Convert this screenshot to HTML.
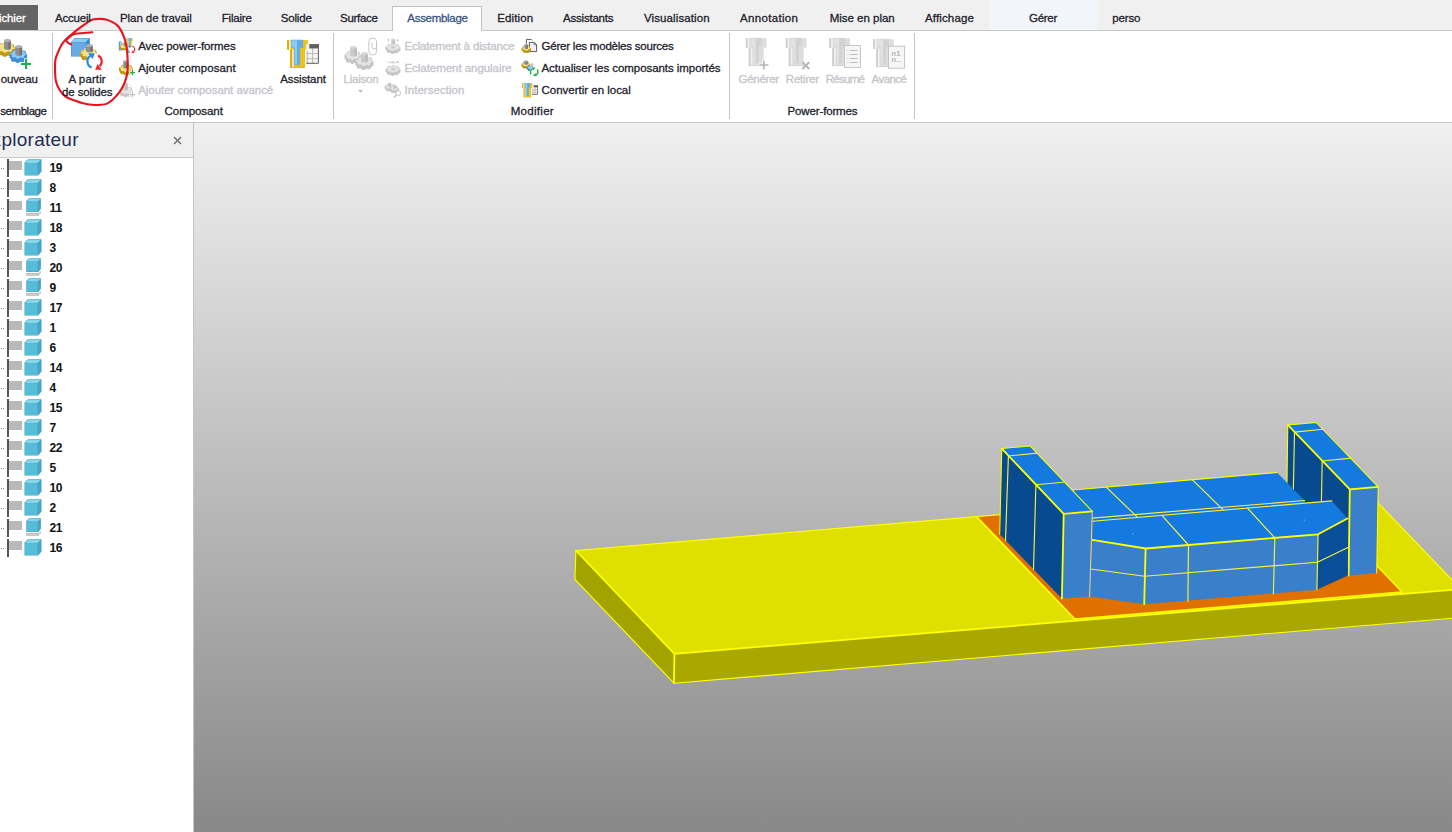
<!DOCTYPE html>
<html><head><meta charset="utf-8"><title>TopSolid</title>
<style>
html,body{margin:0;padding:0;width:1452px;height:832px;overflow:hidden;background:#f0f0f0;font-family:"Liberation Sans",sans-serif;}
body{position:relative}
.t{position:absolute;white-space:pre;font-family:"Liberation Sans",sans-serif;font-weight:400;-webkit-text-stroke:0.3px currentColor}
#tabs{position:absolute;left:0;top:0;width:1452px;height:30px;background:#f0f0f0;border-bottom:1px solid #c8c8c8}
#fichier{position:absolute;left:0;top:5px;width:38px;height:25px;background:#646464}
#gerer{position:absolute;left:989px;top:0;width:109px;height:30px;background:#f2f6fa}
#acttab{position:absolute;left:392px;top:6px;width:88px;height:25px;background:#fff;border:1px solid #c2c2c2;border-bottom:none}
#ribbon{position:absolute;left:0;top:31px;width:1452px;height:91px;background:#fff;border-bottom:1px solid #c9c9c9}
#strip{position:absolute;left:0;top:123px;width:1452px;height:10px;background:#f0f0f0}
.sep{position:absolute;top:33px;width:1px;height:86px;background:#c6c6c6;display:block}
#view{position:absolute;left:194px;top:123px;width:1258px;height:709px;background:linear-gradient(to bottom,#f0f0f0 0%,#888888 100%);overflow:hidden}
#exp{position:absolute;left:0;top:123px;width:193px;height:709px;background:#fff;border-right:1px solid #c4c4c4;overflow:hidden}
#exph{position:absolute;left:0;top:0;width:193px;height:34px;background:#f0f0f0;border-bottom:1px solid #cdcdcd}
#expx{position:absolute;left:173px;top:13px;width:9px;height:9px}
#expx svg{display:block}
#tree{position:absolute;left:0;top:-123px}
.row{position:absolute;left:0;width:193px;height:20px}
.row i{position:absolute;display:block}
.row .d1{left:1px;top:10px;width:1px;height:1px;background:#8a8a8a}
.row .d2{left:3px;top:10px;width:1px;height:1px;background:#8a8a8a}
.row .pole{left:7px;top:1px;width:2px;height:18px;background:#555}
.row .flag{left:9px;top:3px;width:13px;height:9px;background:#b9b9b9}
.row .cube{position:absolute;left:23px;top:0}
.row b{position:absolute;left:49.5px;top:3px;font-size:12px;line-height:14px;font-weight:700;color:#111;letter-spacing:-0.3px}
.ic{position:absolute;display:block;overflow:visible}

</style></head>
<body>
<svg width="0" height="0" style="position:absolute">
<defs>
<g id="cb">
<polygon points="1.5,4.5 5,1.2 18.5,1.2 18.5,13.5 15,17.5 1.5,17.5" fill="#3f9fbd"/>
<polygon points="2,5 5.3,1.8 18,1.8 14.6,5" fill="#84d6ec"/>
<polygon points="14.9,5.2 18,2.2 18,13.3 14.9,16.8" fill="#47a6c3"/>
<rect x="2" y="5.2" width="12.6" height="11.8" fill="#56bdd9"/>
</g>
<g id="cs">
<polygon points="3.3,3.1 6.1,0.3 17.8,0.3 17.8,11.1 15.2,13.9 3.3,13.9" fill="#3f9fbd"/>
<polygon points="3.8,3.6 6.4,0.8 17.3,0.8 14.7,3.6" fill="#84d6ec"/>
<polygon points="15,3.8 17.3,1.3 17.3,10.9 15,13.4" fill="#47a6c3"/>
<rect x="3.8" y="3.8" width="10.9" height="9.7" fill="#56bdd9"/>
<polygon points="3.3,15.1 15.3,15.1 17.8,12.9 17.8,14.9 15.3,17.8 3.3,17.8" fill="#a4acac"/>
<rect x="3.8" y="15.6" width="11" height="1.7" fill="#cfd5d5"/>
<polygon points="15.6,15.2 17.4,13.6 17.4,14.7 15.6,16.9" fill="#e4e8e8"/>
</g>
</defs>
</svg>

<div id="tabs"></div>
<div id="fichier"></div>
<div id="gerer"></div>
<div id="acttab"></div>
<div id="ribbon"></div>
<div id="strip"></div>
<i class="sep" style="left:52px"></i><i class="sep" style="left:333px"></i><i class="sep" style="left:729px"></i><i class="sep" style="left:914px"></i>
<div id="view">
<svg id="m3d" width="1258" height="709" viewBox="194 123 1258 709" style="position:absolute;left:0;top:0;display:block">
<g stroke-linejoin="round" stroke-linecap="round">
<!-- plate fills -->
<polygon points="575.9,550.5 674.4,653.8 673.9,683.2 574.9,579.3" fill="#a3a300"/>
<polygon points="674.4,653.8 1460,589.2 1460,617.6 673.9,683.2" fill="#a8a800"/>
<polygon points="575.9,550.5 1360,484.2 1460,588.2 1460,589.2 674.4,653.8" fill="#e0e000"/>
<polygon points="976.4,516.6 1303.5,488.9 1402,592 1074.8,619" fill="#e07000"/>
<g stroke="#ffff00" fill="none">
<path stroke-width="1.15" d="M575.9 550.5L574.9 579.3L673.9 683.2L1460 617.6M575.9 550.5L1360 484.2L1460 588.2"/>
<path stroke-width="1.8" d="M575.9 550.5L674.4 653.8L1460 589.2M674.4 653.8L673.9 683.2"/>
<path stroke-width="1.8" d="M976.4 516.6L1074.8 619"/><path stroke-width="1.4" d="M1074.8 619L1402 592L1303.5 488.9"/>
</g>
<!-- right wall -->
<polygon points="1287.8,424.9 1349.8,489.3 1348.6,575.4 1286.6,511" fill="#084a8f"/>
<polygon points="1349.8,489.3 1378.2,486.9 1376.7,573 1348.6,575.4" fill="#3a7fc9"/>
<polygon points="1287.8,424.9 1316.2,422.5 1378.2,486.9 1349.8,489.3" fill="#157ae0"/>
<path d="M1294.5 432.1L1322.9 429.2M1294.5 432.1L1292.8 518M1322.2 461L1351 458.1M1322.2 461L1320.5 547" stroke="#faf038" stroke-width="1.15" fill="none"/>
<path d="M1287.8 424.9L1316.2 422.5L1378.2 486.9L1376.7 573M1287.8 424.9L1286.6 511" stroke="#ffff00" stroke-width="1.05" fill="none"/><path d="M1287.8 424.9L1349.8 489.3L1378.2 486.9M1349.8 489.3L1348.6 575.4" stroke="#ffff00" stroke-width="1.8" fill="none"/>
<!-- back row -->
<polygon points="1072.5,490 1277,472.5 1304.6,500.5 1092.5,517.7" fill="#157ae0"/>
<polygon points="1092.5,517.7 1304.6,500.5 1305.2,503.2 1092.5,521.2" fill="#157ae0"/>
<path d="M1106.2 487.1L1137.4 517.2M1192.3 479.7L1223.4 510.2" stroke="#faf038" stroke-width="1.15" fill="none"/>
<path d="M1072.5 490L1277 472.5" stroke="#ffff00" stroke-width="1.2" fill="none"/>
<path d="M1092.5 518.1L1304.6 500.5" stroke="#f4ec58" stroke-width="1.1" fill="none"/>
<!-- front row -->
<polygon points="1092.3,539.8 1145.6,548.5 1144.2,604.2 1089.8,596.5" fill="#3a7fc9"/>
<polygon points="1145.6,548.5 1318.1,534.3 1316.9,589.8 1144.2,604.2" fill="#3a7fc9"/>
<polygon points="1318.1,534.3 1347.4,518.5 1347.9,575.4 1316.9,589.8" fill="#0a4f99"/>
<polygon points="1092.5,521.2 1331.8,500.9 1347.4,518.5 1318.1,534.3 1145.6,548.5 1092.3,539.8" fill="#157ae0"/>
<path d="M1090.8 569L1144.6 576.3L1317.4 562.2L1347.9 547.5M1188.5 545L1187.9 601.3M1274.8 537.9L1273.4 593.9M1161.9 515.3L1188.5 545M1247.5 508.1L1274.8 537.9M1318.1 534.3L1316.9 589.8" stroke="#faf038" stroke-width="1.15" fill="none"/>
<path d="M1092.5 521.2L1331.8 500.9" stroke="#faf038" stroke-width="1.15" fill="none"/>
<path d="M1092.3 539.8L1145.6 548.5L1318.1 534.3L1347.4 518.5M1145.6 548.5L1144.2 604.2" stroke="#ffff00" stroke-width="1.8" fill="none"/>
<rect x="1132" y="533" width="1.2" height="1.4" fill="#7fa6dc"/><rect x="1303.6" y="519.5" width="1.2" height="1.4" fill="#7fa6dc"/>
<!-- left wall -->
<polygon points="1001.8,448.6 1063.7,513.9 1061.9,598.6 999.7,534.3" fill="#084a8f"/>
<polygon points="1063.7,513.9 1092.3,511.3 1089.6,596.7 1061.9,598.6" fill="#3a7fc9"/>
<polygon points="1001.8,448.6 1030.1,445.9 1092.3,511.3 1063.7,513.9" fill="#157ae0"/>
<path d="M1008.4 456L1036.7 453.1M1008.4 456L1005.5 540.4M1035.9 484.8L1063.2 482.2M1035.9 484.8L1033.5 569.5" stroke="#faf038" stroke-width="1.15" fill="none"/>
<path d="M1092.3 511.3L1089.6 596.7" stroke="#d6d8a8" stroke-width="1" fill="none"/>
<path d="M1001.8 448.6L1030.1 445.9L1092.3 511.3M1001.8 448.6L999.7 534.3" stroke="#ffff00" stroke-width="1.05" fill="none"/><path d="M1001.8 448.6L1063.7 513.9L1092.3 511.3M1063.7 513.9L1061.9 598.6" stroke="#ffff00" stroke-width="1.8" fill="none"/>
</g>
</svg>

</div>
<div id="exp"><div id="exph"></div><div id="expx"><svg width="9" height="9" viewBox="0 0 9 9"><path d="M1 1L8 8M8 1L1 8" stroke="#707070" stroke-width="1.5" fill="none"/></svg></div>
<div id="tree">
<div class="row" style="top:158px"><i class="d1"></i><i class="d2"></i><i class="pole"></i><i class="flag"></i><svg class="cube" width="20" height="20" viewBox="0 0 20 20"><use href="#cb"/></svg><b>19</b></div>
<div class="row" style="top:178px"><i class="d1"></i><i class="d2"></i><i class="pole"></i><i class="flag"></i><svg class="cube" width="20" height="20" viewBox="0 0 20 20"><use href="#cb"/></svg><b>8</b></div>
<div class="row" style="top:198px"><i class="d1"></i><i class="d2"></i><i class="pole"></i><i class="flag"></i><svg class="cube" width="20" height="20" viewBox="0 0 20 20"><use href="#cs"/></svg><b>11</b></div>
<div class="row" style="top:218px"><i class="d1"></i><i class="d2"></i><i class="pole"></i><i class="flag"></i><svg class="cube" width="20" height="20" viewBox="0 0 20 20"><use href="#cb"/></svg><b>18</b></div>
<div class="row" style="top:238px"><i class="d1"></i><i class="d2"></i><i class="pole"></i><i class="flag"></i><svg class="cube" width="20" height="20" viewBox="0 0 20 20"><use href="#cb"/></svg><b>3</b></div>
<div class="row" style="top:258px"><i class="d1"></i><i class="d2"></i><i class="pole"></i><i class="flag"></i><svg class="cube" width="20" height="20" viewBox="0 0 20 20"><use href="#cs"/></svg><b>20</b></div>
<div class="row" style="top:278px"><i class="d1"></i><i class="d2"></i><i class="pole"></i><i class="flag"></i><svg class="cube" width="20" height="20" viewBox="0 0 20 20"><use href="#cs"/></svg><b>9</b></div>
<div class="row" style="top:298px"><i class="d1"></i><i class="d2"></i><i class="pole"></i><i class="flag"></i><svg class="cube" width="20" height="20" viewBox="0 0 20 20"><use href="#cb"/></svg><b>17</b></div>
<div class="row" style="top:318px"><i class="d1"></i><i class="d2"></i><i class="pole"></i><i class="flag"></i><svg class="cube" width="20" height="20" viewBox="0 0 20 20"><use href="#cb"/></svg><b>1</b></div>
<div class="row" style="top:338px"><i class="d1"></i><i class="d2"></i><i class="pole"></i><i class="flag"></i><svg class="cube" width="20" height="20" viewBox="0 0 20 20"><use href="#cb"/></svg><b>6</b></div>
<div class="row" style="top:358px"><i class="d1"></i><i class="d2"></i><i class="pole"></i><i class="flag"></i><svg class="cube" width="20" height="20" viewBox="0 0 20 20"><use href="#cb"/></svg><b>14</b></div>
<div class="row" style="top:378px"><i class="d1"></i><i class="d2"></i><i class="pole"></i><i class="flag"></i><svg class="cube" width="20" height="20" viewBox="0 0 20 20"><use href="#cb"/></svg><b>4</b></div>
<div class="row" style="top:398px"><i class="d1"></i><i class="d2"></i><i class="pole"></i><i class="flag"></i><svg class="cube" width="20" height="20" viewBox="0 0 20 20"><use href="#cb"/></svg><b>15</b></div>
<div class="row" style="top:418px"><i class="d1"></i><i class="d2"></i><i class="pole"></i><i class="flag"></i><svg class="cube" width="20" height="20" viewBox="0 0 20 20"><use href="#cb"/></svg><b>7</b></div>
<div class="row" style="top:438px"><i class="d1"></i><i class="d2"></i><i class="pole"></i><i class="flag"></i><svg class="cube" width="20" height="20" viewBox="0 0 20 20"><use href="#cb"/></svg><b>22</b></div>
<div class="row" style="top:458px"><i class="d1"></i><i class="d2"></i><i class="pole"></i><i class="flag"></i><svg class="cube" width="20" height="20" viewBox="0 0 20 20"><use href="#cb"/></svg><b>5</b></div>
<div class="row" style="top:478px"><i class="d1"></i><i class="d2"></i><i class="pole"></i><i class="flag"></i><svg class="cube" width="20" height="20" viewBox="0 0 20 20"><use href="#cb"/></svg><b>10</b></div>
<div class="row" style="top:498px"><i class="d1"></i><i class="d2"></i><i class="pole"></i><i class="flag"></i><svg class="cube" width="20" height="20" viewBox="0 0 20 20"><use href="#cb"/></svg><b>2</b></div>
<div class="row" style="top:518px"><i class="d1"></i><i class="d2"></i><i class="pole"></i><i class="flag"></i><svg class="cube" width="20" height="20" viewBox="0 0 20 20"><use href="#cs"/></svg><b>21</b></div>
<div class="row" style="top:538px"><i class="d1"></i><i class="d2"></i><i class="pole"></i><i class="flag"></i><svg class="cube" width="20" height="20" viewBox="0 0 20 20"><use href="#cb"/></svg><b>16</b></div>
</div></div>
<svg class="ic" id="icons" width="1452" height="124" viewBox="0 0 1452 124" style="left:0;top:0">
<path d="M15.1 51.4L14.92 52.36L14.92 48.76L15.1 47.8ZM14.92 52.36L12.6 52.9L12.6 49.3L14.92 48.76ZM12.6 52.9L11.89 53.58L11.89 49.98L12.6 49.3ZM11.89 49.98L12.29 51.26L12.29 54.86L11.89 53.58ZM12.29 54.86L10.83 55.47L10.83 51.87L12.29 51.26ZM10.83 55.47L8.44 55.02L8.44 51.42L10.83 51.87ZM8.44 55.02L7 55.24L7 51.64L8.44 51.42ZM7 55.24L5.5 56.3L5.5 52.7L7 51.64ZM5.5 56.3L3.63 56.21L3.63 52.61L5.5 52.7ZM3.63 56.21L2.56 55.02L2.56 51.42L3.63 52.61ZM2.56 55.02L1.23 54.66L1.23 51.06L2.56 51.42ZM1.23 54.66L-1.29 54.86L-1.29 51.26L1.23 51.06ZM-1.29 54.86L-2.48 54.12L-2.48 50.52L-1.29 51.26ZM-2.48 50.52L-1.6 49.3L-1.6 52.9L-2.48 54.12ZM-1.6 52.9L-2.03 52.16L-2.03 48.56L-1.6 49.3ZM-2.03 52.16L-4.1 51.4L-4.1 47.8L-2.03 48.56ZM-4.1 47.8L-3.92 46.84L-3.92 50.44L-4.1 51.4ZM-3.92 46.84L-1.6 46.3L-1.6 49.9L-3.92 50.44ZM-1.6 46.3L-0.89 45.62L-0.89 49.22L-1.6 49.9ZM-0.89 49.22L-1.29 47.94L-1.29 44.34L-0.89 45.62ZM-1.29 44.34L0.17 43.73L0.17 47.33L-1.29 47.94ZM0.17 43.73L2.56 44.18L2.56 47.78L0.17 47.33ZM2.56 44.18L4 43.96L4 47.56L2.56 47.78ZM4 43.96L5.5 42.9L5.5 46.5L4 47.56ZM5.5 42.9L7.37 42.99L7.37 46.59L5.5 46.5ZM7.37 42.99L8.44 44.18L8.44 47.78L7.37 46.59ZM8.44 44.18L9.77 44.54L9.77 48.14L8.44 47.78ZM9.77 44.54L12.29 44.34L12.29 47.94L9.77 48.14ZM12.29 44.34L13.48 45.08L13.48 48.68L12.29 47.94ZM13.48 48.68L12.6 49.9L12.6 46.3L13.48 45.08ZM12.6 46.3L13.03 47.04L13.03 50.64L12.6 49.9ZM13.03 47.04L15.1 47.8L15.1 51.4L13.03 50.64ZM15.1 51.4L14.92 52.36L12.6 52.9L11.89 53.58L12.29 54.86L10.83 55.47L8.44 55.02L7 55.24L5.5 56.3L3.63 56.21L2.56 55.02L1.23 54.66L-1.29 54.86L-2.48 54.12L-1.6 52.9L-2.03 52.16L-4.1 51.4L-3.92 50.44L-1.6 49.9L-0.89 49.22L-1.29 47.94L0.17 47.33L2.56 47.78L4 47.56L5.5 46.5L7.37 46.59L8.44 47.78L9.77 48.14L12.29 47.94L13.48 48.68L12.6 49.9L13.03 50.64ZM15.1 47.8L14.92 48.76L12.6 49.3L11.89 49.98L12.29 51.26L10.83 51.87L8.44 51.42L7 51.64L5.5 52.7L3.63 52.61L2.56 51.42L1.23 51.06L-1.29 51.26L-2.48 50.52L-1.6 49.3L-2.03 48.56L-4.1 47.8L-3.92 46.84L-1.6 46.3L-0.89 45.62L-1.29 44.34L0.17 43.73L2.56 44.18L4 43.96L5.5 42.9L7.37 42.99L8.44 44.18L9.77 44.54L12.29 44.34L13.48 45.08L12.6 46.3L13.03 47.04Z" fill="#cfa81c" stroke="#b89414" stroke-width="0.6" stroke-linejoin="round" fill-rule="nonzero"/><polygon points="15.1,47.8 14.92,48.76 12.6,49.3 11.89,49.98 12.29,51.26 10.83,51.87 8.44,51.42 7,51.64 5.5,52.7 3.63,52.61 2.56,51.42 1.23,51.06 -1.29,51.26 -2.48,50.52 -1.6,49.3 -2.03,48.56 -4.1,47.8 -3.92,46.84 -1.6,46.3 -0.89,45.62 -1.29,44.34 0.17,43.73 2.56,44.18 4,43.96 5.5,42.9 7.37,42.99 8.44,44.18 9.77,44.54 12.29,44.34 13.48,45.08 12.6,46.3 13.03,47.04" fill="#f6e284"/>
<path d="M4.1 40.47L4.1 48.33A3.35 1.47 0 0 0 10.8 48.33L10.8 40.47Z" fill="#8e8e8e"/><path d="M8.25 40.47L8.25 49.65A3.35 1.47 0 0 0 10.8 48.33L10.8 40.47Z" fill="#747474"/><ellipse cx="7.45" cy="40.47" rx="3.35" ry="1.47" fill="#b2b2b2"/>
<path d="M26.6 58L26.44 58.9L26.44 55.1L26.6 54.2ZM26.44 58.9L24.46 59.41L24.46 55.61L26.44 55.1ZM24.46 59.41L23.85 60.04L23.85 56.24L24.46 55.61ZM23.85 56.24L24.2 57.45L24.2 61.25L23.85 60.04ZM24.2 61.25L22.96 61.82L22.96 58.02L24.2 57.45ZM22.96 61.82L20.91 61.4L20.91 57.6L22.96 58.02ZM20.91 61.4L19.68 61.61L19.68 57.81L20.91 57.6ZM19.68 61.61L18.4 62.6L18.4 58.8L19.68 57.81ZM18.4 62.6L16.8 62.51L16.8 58.71L18.4 58.8ZM16.8 62.51L15.89 61.4L15.89 57.6L16.8 58.71ZM15.89 61.4L14.76 61.06L14.76 57.26L15.89 57.6ZM14.76 61.06L12.6 61.25L12.6 57.45L14.76 57.26ZM12.6 61.25L11.58 60.56L11.58 56.76L12.6 57.45ZM11.58 56.76L12.34 55.61L12.34 59.41L11.58 60.56ZM12.34 59.41L11.97 58.72L11.97 54.92L12.34 55.61ZM11.97 58.72L10.2 58L10.2 54.2L11.97 54.92ZM10.2 54.2L10.36 53.3L10.36 57.1L10.2 58ZM10.36 53.3L12.34 52.79L12.34 56.59L10.36 57.1ZM12.34 52.79L12.95 52.16L12.95 55.96L12.34 56.59ZM12.95 55.96L12.6 54.75L12.6 50.95L12.95 52.16ZM12.6 50.95L13.84 50.38L13.84 54.18L12.6 54.75ZM13.84 50.38L15.89 50.8L15.89 54.6L13.84 54.18ZM15.89 50.8L17.12 50.59L17.12 54.39L15.89 54.6ZM17.12 50.59L18.4 49.6L18.4 53.4L17.12 54.39ZM18.4 49.6L20 49.69L20 53.49L18.4 53.4ZM20 49.69L20.91 50.8L20.91 54.6L20 53.49ZM20.91 50.8L22.04 51.14L22.04 54.94L20.91 54.6ZM22.04 51.14L24.2 50.95L24.2 54.75L22.04 54.94ZM24.2 50.95L25.22 51.64L25.22 55.44L24.2 54.75ZM25.22 55.44L24.46 56.59L24.46 52.79L25.22 51.64ZM24.46 52.79L24.83 53.48L24.83 57.28L24.46 56.59ZM24.83 53.48L26.6 54.2L26.6 58L24.83 57.28ZM26.6 58L26.44 58.9L24.46 59.41L23.85 60.04L24.2 61.25L22.96 61.82L20.91 61.4L19.68 61.61L18.4 62.6L16.8 62.51L15.89 61.4L14.76 61.06L12.6 61.25L11.58 60.56L12.34 59.41L11.97 58.72L10.2 58L10.36 57.1L12.34 56.59L12.95 55.96L12.6 54.75L13.84 54.18L15.89 54.6L17.12 54.39L18.4 53.4L20 53.49L20.91 54.6L22.04 54.94L24.2 54.75L25.22 55.44L24.46 56.59L24.83 57.28ZM26.6 54.2L26.44 55.1L24.46 55.61L23.85 56.24L24.2 57.45L22.96 58.02L20.91 57.6L19.68 57.81L18.4 58.8L16.8 58.71L15.89 57.6L14.76 57.26L12.6 57.45L11.58 56.76L12.34 55.61L11.97 54.92L10.2 54.2L10.36 53.3L12.34 52.79L12.95 52.16L12.6 50.95L13.84 50.38L15.89 50.8L17.12 50.59L18.4 49.6L20 49.69L20.91 50.8L22.04 51.14L24.2 50.95L25.22 51.64L24.46 52.79L24.83 53.48Z" fill="#4a9cdc" stroke="#3e8ccc" stroke-width="0.6" stroke-linejoin="round" fill-rule="nonzero"/><polygon points="26.6,54.2 26.44,55.1 24.46,55.61 23.85,56.24 24.2,57.45 22.96,58.02 20.91,57.6 19.68,57.81 18.4,58.8 16.8,58.71 15.89,57.6 14.76,57.26 12.6,57.45 11.58,56.76 12.34,55.61 11.97,54.92 10.2,54.2 10.36,53.3 12.34,52.79 12.95,52.16 12.6,50.95 13.84,50.38 15.89,50.8 17.12,50.59 18.4,49.6 20,49.69 20.91,50.8 22.04,51.14 24.2,50.95 25.22,51.64 24.46,52.79 24.83,53.48" fill="#8ccaf8"/>
<path d="M15.3 46.6L15.3 54.2A3.4 1.5 0 0 0 22.1 54.2L22.1 46.6Z" fill="#8e8e8e"/><path d="M19.52 46.6L19.52 55.55A3.4 1.5 0 0 0 22.1 54.2L22.1 46.6Z" fill="#747474"/><ellipse cx="18.7" cy="46.6" rx="3.4" ry="1.5" fill="#b2b2b2"/>
<path d="M20.45 63.95H31.65M26.05 58.35V69.55" stroke="#fff" stroke-width="3.7" fill="none"/><path d="M21.05 63.95H31.05M26.05 58.95V68.95" stroke="#1cb04a" stroke-width="2.1" fill="none"/>
<polygon points="71,41.9 74.9,38.1 89.8,38.1 89.8,52.5 86,56.6 71,56.6" fill="#4690cc"/>
<polygon points="71.5,41.9 75.1,38.6 89.3,38.6 85.8,41.9" fill="#8ccaf8"/>
<polygon points="86.2,42 89.4,38.9 89.4,52.3 86.2,55.8" fill="#3d8ccc"/>
<rect x="71.5" y="42.3" width="14.2" height="13.8" fill="#68aae2"/>
<ellipse cx="89" cy="55" rx="9.2" ry="7.2" fill="#fff"/>
<path d="M97.2 56.6L97.04 57.46L97.04 54.06L97.2 53.2ZM97.04 57.46L95.06 57.95L95.06 54.55L97.04 54.06ZM95.06 57.95L94.45 58.56L94.45 55.16L95.06 54.55ZM94.45 55.16L94.8 56.31L94.8 59.71L94.45 58.56ZM94.8 59.71L93.56 60.26L93.56 56.86L94.8 56.31ZM93.56 60.26L91.51 59.85L91.51 56.45L93.56 56.86ZM91.51 59.85L90.28 60.05L90.28 56.65L91.51 56.45ZM90.28 60.05L89 61L89 57.6L90.28 56.65ZM89 61L87.4 60.92L87.4 57.52L89 57.6ZM87.4 60.92L86.49 59.85L86.49 56.45L87.4 57.52ZM86.49 59.85L85.36 59.53L85.36 56.13L86.49 56.45ZM85.36 59.53L83.2 59.71L83.2 56.31L85.36 56.13ZM83.2 59.71L82.18 59.04L82.18 55.64L83.2 56.31ZM82.18 55.64L82.94 54.55L82.94 57.95L82.18 59.04ZM82.94 57.95L82.57 57.29L82.57 53.89L82.94 54.55ZM82.57 57.29L80.8 56.6L80.8 53.2L82.57 53.89ZM80.8 53.2L80.96 52.34L80.96 55.74L80.8 56.6ZM80.96 52.34L82.94 51.85L82.94 55.25L80.96 55.74ZM82.94 51.85L83.55 51.24L83.55 54.64L82.94 55.25ZM83.55 54.64L83.2 53.49L83.2 50.09L83.55 51.24ZM83.2 50.09L84.44 49.54L84.44 52.94L83.2 53.49ZM84.44 49.54L86.49 49.95L86.49 53.35L84.44 52.94ZM86.49 49.95L87.72 49.75L87.72 53.15L86.49 53.35ZM87.72 49.75L89 48.8L89 52.2L87.72 53.15ZM89 48.8L90.6 48.88L90.6 52.28L89 52.2ZM90.6 48.88L91.51 49.95L91.51 53.35L90.6 52.28ZM91.51 49.95L92.64 50.27L92.64 53.67L91.51 53.35ZM92.64 50.27L94.8 50.09L94.8 53.49L92.64 53.67ZM94.8 50.09L95.82 50.76L95.82 54.16L94.8 53.49ZM95.82 54.16L95.06 55.25L95.06 51.85L95.82 50.76ZM95.06 51.85L95.43 52.51L95.43 55.91L95.06 55.25ZM95.43 52.51L97.2 53.2L97.2 56.6L95.43 55.91ZM97.2 56.6L97.04 57.46L95.06 57.95L94.45 58.56L94.8 59.71L93.56 60.26L91.51 59.85L90.28 60.05L89 61L87.4 60.92L86.49 59.85L85.36 59.53L83.2 59.71L82.18 59.04L82.94 57.95L82.57 57.29L80.8 56.6L80.96 55.74L82.94 55.25L83.55 54.64L83.2 53.49L84.44 52.94L86.49 53.35L87.72 53.15L89 52.2L90.6 52.28L91.51 53.35L92.64 53.67L94.8 53.49L95.82 54.16L95.06 55.25L95.43 55.91ZM97.2 53.2L97.04 54.06L95.06 54.55L94.45 55.16L94.8 56.31L93.56 56.86L91.51 56.45L90.28 56.65L89 57.6L87.4 57.52L86.49 56.45L85.36 56.13L83.2 56.31L82.18 55.64L82.94 54.55L82.57 53.89L80.8 53.2L80.96 52.34L82.94 51.85L83.55 51.24L83.2 50.09L84.44 49.54L86.49 49.95L87.72 49.75L89 48.8L90.6 48.88L91.51 49.95L92.64 50.27L94.8 50.09L95.82 50.76L95.06 51.85L95.43 52.51Z" fill="#cfa81c" stroke="#b89414" stroke-width="0.6" stroke-linejoin="round" fill-rule="nonzero"/><polygon points="97.2,53.2 97.04,54.06 95.06,54.55 94.45,55.16 94.8,56.31 93.56,56.86 91.51,56.45 90.28,56.65 89,57.6 87.4,57.52 86.49,56.45 85.36,56.13 83.2,56.31 82.18,55.64 82.94,54.55 82.57,53.89 80.8,53.2 80.96,52.34 82.94,51.85 83.55,51.24 83.2,50.09 84.44,49.54 86.49,49.95 87.72,49.75 89,48.8 90.6,48.88 91.51,49.95 92.64,50.27 94.8,50.09 95.82,50.76 95.06,51.85 95.43,52.51" fill="#f6e284"/>
<path d="M86 45.42L86 50.78A3.45 1.52 0 0 0 92.9 50.78L92.9 45.42Z" fill="#8e8e8e"/><path d="M90.28 45.42L90.28 52.15A3.45 1.52 0 0 0 92.9 50.78L92.9 45.42Z" fill="#747474"/><ellipse cx="89.45" cy="45.42" rx="3.45" ry="1.52" fill="#b2b2b2"/>
<circle cx="94.9" cy="61.4" r="8.6" fill="#fff"/>
<path d="M91.6 67.4A6.6 6.6 0 0 1 90.6 55.6" stroke="#1e8ee6" stroke-width="2.2" fill="none"/>
<polygon points="88.1,53.2 94.9,53.2 92.5,59" fill="#1e8ee6"/>
<path d="M98 55.4A6.6 6.6 0 0 1 99.6 66.2" stroke="#f5262e" stroke-width="2.2" fill="none"/>
<polygon points="95.1,69.8 101.8,69.8 97.5,64" fill="#f5262e"/>
<path d="M121.6 42.2H119.4V49.8H121.8" stroke="#4a9cdc" stroke-width="1.2" fill="none"/>
<rect x="119.9" y="42.6" width="3" height="6.8" fill="#a8d4f6"/>
<path d="M126.8 47.9L126.68 48.47L126.68 46.87L126.8 46.3ZM126.68 48.47L125.76 48.78L125.76 47.18L126.68 46.87ZM125.76 48.78L125.32 49.14L125.32 47.54L125.76 47.18ZM125.32 49.14L125.1 49.81L125.1 48.21L125.32 47.54ZM125.1 49.81L124.28 50.03L124.28 48.43L125.1 48.21ZM124.28 50.03L123.4 49.66L123.4 48.06L124.28 48.43ZM123.4 49.66L122.7 49.6L122.7 48L123.4 48.06ZM122.7 49.6L121.7 49.81L121.7 48.21L122.7 48ZM121.7 49.81L121 49.46L121 47.86L121.7 48.21ZM121 47.86L121.04 47.18L121.04 48.78L121 49.46ZM121.04 48.78L120.77 48.36L120.77 46.76L121.04 47.18ZM120.77 48.36L120 47.9L120 46.3L120.77 46.76ZM120 46.3L120.12 45.73L120.12 47.33L120 47.9ZM120.12 45.73L121.04 45.42L121.04 47.02L120.12 47.33ZM121.04 45.42L121.48 45.06L121.48 46.66L121.04 47.02ZM121.48 45.06L121.7 44.39L121.7 45.99L121.48 46.66ZM121.7 44.39L122.52 44.17L122.52 45.77L121.7 45.99ZM122.52 44.17L123.4 44.54L123.4 46.14L122.52 45.77ZM123.4 44.54L124.1 44.6L124.1 46.2L123.4 46.14ZM124.1 44.6L125.1 44.39L125.1 45.99L124.1 46.2ZM125.1 44.39L125.8 44.74L125.8 46.34L125.1 45.99ZM125.8 46.34L125.76 47.02L125.76 45.42L125.8 44.74ZM125.76 45.42L126.03 45.84L126.03 47.44L125.76 47.02ZM126.03 45.84L126.8 46.3L126.8 47.9L126.03 47.44ZM126.8 47.9L126.68 48.47L125.76 48.78L125.32 49.14L125.1 49.81L124.28 50.03L123.4 49.66L122.7 49.6L121.7 49.81L121 49.46L121.04 48.78L120.77 48.36L120 47.9L120.12 47.33L121.04 47.02L121.48 46.66L121.7 45.99L122.52 45.77L123.4 46.14L124.1 46.2L125.1 45.99L125.8 46.34L125.76 47.02L126.03 47.44ZM126.8 46.3L126.68 46.87L125.76 47.18L125.32 47.54L125.1 48.21L124.28 48.43L123.4 48.06L122.7 48L121.7 48.21L121 47.86L121.04 47.18L120.77 46.76L120 46.3L120.12 45.73L121.04 45.42L121.48 45.06L121.7 44.39L122.52 44.17L123.4 44.54L124.1 44.6L125.1 44.39L125.8 44.74L125.76 45.42L126.03 45.84Z" fill="#cfa81c" stroke="#b89414" stroke-width="0.6" stroke-linejoin="round" fill-rule="nonzero"/><polygon points="126.8,46.3 126.68,46.87 125.76,47.18 125.32,47.54 125.1,48.21 124.28,48.43 123.4,48.06 122.7,48 121.7,48.21 121,47.86 121.04,47.18 120.77,46.76 120,46.3 120.12,45.73 121.04,45.42 121.48,45.06 121.7,44.39 122.52,44.17 123.4,44.54 124.1,44.6 125.1,44.39 125.8,44.74 125.76,45.42 126.03,45.84" fill="#f6e284"/>
<path d="M123.6 42.37L123.6 45.83A1.3 0.57 0 0 0 126.2 45.83L126.2 42.37Z" fill="#8e8e8e"/><path d="M125.21 42.37L125.21 46.34A1.3 0.57 0 0 0 126.2 45.83L126.2 42.37Z" fill="#747474"/><ellipse cx="124.9" cy="42.37" rx="1.3" ry="0.57" fill="#b2b2b2"/>
<path d="M126.6 38.3H132.63V41.08H131.79V46.39H127.47V41.08H126.6Z" fill="#eec41c"/><rect x="126.6" y="38.3" width="0.52" height="2.78" fill="#dcae08"/><rect x="127.47" y="41.08" width="0.52" height="5.31" fill="#dcae08"/><rect x="127.18" y="38.39" width="0.52" height="2.61" fill="#fff0c4"/><rect x="128.08" y="41.08" width="0.52" height="5.22" fill="#fff0c4"/><rect x="127.47" y="46.07" width="4.32" height="0.32" fill="#dcae08" opacity="0.6"/><path d="M127.79 38.3H131.15V40.53H130.28V45.49H128.66V40.53H127.79Z" fill="#8acafa" stroke="#4a98d8" stroke-width="0.14"/><path d="M129.47 38.36H131.09V40.47H130.22V45.43H129.47Z" fill="#62aae2"/>
<circle cx="129.6" cy="46.6" r="1.2" fill="#1e8ee6"/>
<path d="M129.9 52.6A3 3 0 0 1 127.9 49" stroke="#1e8ee6" stroke-width="1.1" fill="none"/>
<path d="M132.2 46.3A3.2 3.2 0 0 1 133.9 51.6" stroke="#f5262e" stroke-width="1.1" fill="none"/>
<polygon points="131,52.4 134.6,53.2 133.4,50.3" fill="#f5262e"/>
<path d="M132.4 71L132.28 71.74L132.28 69.14L132.4 68.4ZM132.28 71.74L130.73 72.16L130.73 69.56L132.28 69.14ZM130.73 72.16L130.26 72.69L130.26 70.09L130.73 69.56ZM130.26 70.09L130.53 71.09L130.53 73.69L130.26 72.69ZM130.53 73.69L129.56 74.16L129.56 71.56L130.53 71.09ZM129.56 74.16L127.96 73.81L127.96 71.21L129.56 71.56ZM127.96 73.81L127 73.98L127 71.38L127.96 71.21ZM127 73.98L126 74.8L126 72.2L127 71.38ZM126 74.8L124.75 74.73L124.75 72.13L126 72.2ZM124.75 74.73L124.04 73.81L124.04 71.21L124.75 72.13ZM124.04 73.81L123.16 73.53L123.16 70.93L124.04 71.21ZM123.16 73.53L121.47 73.69L121.47 71.09L123.16 70.93ZM121.47 73.69L120.68 73.11L120.68 70.51L121.47 71.09ZM120.68 70.51L121.27 69.56L121.27 72.16L120.68 73.11ZM121.27 72.16L120.98 71.59L120.98 68.99L121.27 69.56ZM120.98 71.59L119.6 71L119.6 68.4L120.98 68.99ZM119.6 68.4L119.72 67.66L119.72 70.26L119.6 71ZM119.72 67.66L121.27 67.24L121.27 69.84L119.72 70.26ZM121.27 67.24L121.74 66.71L121.74 69.31L121.27 69.84ZM121.74 69.31L121.47 68.31L121.47 65.71L121.74 66.71ZM121.47 65.71L122.44 65.24L122.44 67.84L121.47 68.31ZM122.44 65.24L124.04 65.59L124.04 68.19L122.44 67.84ZM124.04 65.59L125 65.42L125 68.02L124.04 68.19ZM125 65.42L126 64.6L126 67.2L125 68.02ZM126 64.6L127.25 64.67L127.25 67.27L126 67.2ZM127.25 64.67L127.96 65.59L127.96 68.19L127.25 67.27ZM127.96 65.59L128.84 65.87L128.84 68.47L127.96 68.19ZM128.84 65.87L130.53 65.71L130.53 68.31L128.84 68.47ZM130.53 65.71L131.32 66.29L131.32 68.89L130.53 68.31ZM131.32 68.89L130.73 69.84L130.73 67.24L131.32 66.29ZM130.73 67.24L131.02 67.81L131.02 70.41L130.73 69.84ZM131.02 67.81L132.4 68.4L132.4 71L131.02 70.41ZM132.4 71L132.28 71.74L130.73 72.16L130.26 72.69L130.53 73.69L129.56 74.16L127.96 73.81L127 73.98L126 74.8L124.75 74.73L124.04 73.81L123.16 73.53L121.47 73.69L120.68 73.11L121.27 72.16L120.98 71.59L119.6 71L119.72 70.26L121.27 69.84L121.74 69.31L121.47 68.31L122.44 67.84L124.04 68.19L125 68.02L126 67.2L127.25 67.27L127.96 68.19L128.84 68.47L130.53 68.31L131.32 68.89L130.73 69.84L131.02 70.41ZM132.4 68.4L132.28 69.14L130.73 69.56L130.26 70.09L130.53 71.09L129.56 71.56L127.96 71.21L127 71.38L126 72.2L124.75 72.13L124.04 71.21L123.16 70.93L121.47 71.09L120.68 70.51L121.27 69.56L120.98 68.99L119.6 68.4L119.72 67.66L121.27 67.24L121.74 66.71L121.47 65.71L122.44 65.24L124.04 65.59L125 65.42L126 64.6L127.25 64.67L127.96 65.59L128.84 65.87L130.53 65.71L131.32 66.29L130.73 67.24L131.02 67.81Z" fill="#cfa81c" stroke="#b89414" stroke-width="0.6" stroke-linejoin="round" fill-rule="nonzero"/><polygon points="132.4,68.4 132.28,69.14 130.73,69.56 130.26,70.09 130.53,71.09 129.56,71.56 127.96,71.21 127,71.38 126,72.2 124.75,72.13 124.04,71.21 123.16,70.93 121.47,71.09 120.68,70.51 121.27,69.56 120.98,68.99 119.6,68.4 119.72,67.66 121.27,67.24 121.74,66.71 121.47,65.71 122.44,65.24 124.04,65.59 125,65.42 126,64.6 127.25,64.67 127.96,65.59 128.84,65.87 130.53,65.71 131.32,66.29 130.73,67.24 131.02,67.81" fill="#f6e284"/>
<path d="M123.3 61.12L123.3 67.48A2.1 0.92 0 0 0 127.5 67.48L127.5 61.12Z" fill="#8e8e8e"/><path d="M125.9 61.12L125.9 68.31A2.1 0.92 0 0 0 127.5 67.48L127.5 61.12Z" fill="#747474"/><ellipse cx="125.4" cy="61.12" rx="2.1" ry="0.92" fill="#b2b2b2"/>
<path d="M129.2 72.7H135.6M132.4 69.5V75.9" stroke="#fff" stroke-width="2.9000000000000004" fill="none"/><path d="M129.8 72.7H135M132.4 70.1V75.3" stroke="#1cb04a" stroke-width="1.3" fill="none"/>
<path d="M132.4 93L132.28 93.74L132.28 91.14L132.4 90.4ZM132.28 93.74L130.73 94.16L130.73 91.56L132.28 91.14ZM130.73 94.16L130.26 94.69L130.26 92.09L130.73 91.56ZM130.26 92.09L130.53 93.09L130.53 95.69L130.26 94.69ZM130.53 95.69L129.56 96.16L129.56 93.56L130.53 93.09ZM129.56 96.16L127.96 95.81L127.96 93.21L129.56 93.56ZM127.96 95.81L127 95.98L127 93.38L127.96 93.21ZM127 95.98L126 96.8L126 94.2L127 93.38ZM126 96.8L124.75 96.73L124.75 94.13L126 94.2ZM124.75 96.73L124.04 95.81L124.04 93.21L124.75 94.13ZM124.04 95.81L123.16 95.53L123.16 92.93L124.04 93.21ZM123.16 95.53L121.47 95.69L121.47 93.09L123.16 92.93ZM121.47 95.69L120.68 95.11L120.68 92.51L121.47 93.09ZM120.68 92.51L121.27 91.56L121.27 94.16L120.68 95.11ZM121.27 94.16L120.98 93.59L120.98 90.99L121.27 91.56ZM120.98 93.59L119.6 93L119.6 90.4L120.98 90.99ZM119.6 90.4L119.72 89.66L119.72 92.26L119.6 93ZM119.72 89.66L121.27 89.24L121.27 91.84L119.72 92.26ZM121.27 89.24L121.74 88.71L121.74 91.31L121.27 91.84ZM121.74 91.31L121.47 90.31L121.47 87.71L121.74 88.71ZM121.47 87.71L122.44 87.24L122.44 89.84L121.47 90.31ZM122.44 87.24L124.04 87.59L124.04 90.19L122.44 89.84ZM124.04 87.59L125 87.42L125 90.02L124.04 90.19ZM125 87.42L126 86.6L126 89.2L125 90.02ZM126 86.6L127.25 86.67L127.25 89.27L126 89.2ZM127.25 86.67L127.96 87.59L127.96 90.19L127.25 89.27ZM127.96 87.59L128.84 87.87L128.84 90.47L127.96 90.19ZM128.84 87.87L130.53 87.71L130.53 90.31L128.84 90.47ZM130.53 87.71L131.32 88.29L131.32 90.89L130.53 90.31ZM131.32 90.89L130.73 91.84L130.73 89.24L131.32 88.29ZM130.73 89.24L131.02 89.81L131.02 92.41L130.73 91.84ZM131.02 89.81L132.4 90.4L132.4 93L131.02 92.41ZM132.4 93L132.28 93.74L130.73 94.16L130.26 94.69L130.53 95.69L129.56 96.16L127.96 95.81L127 95.98L126 96.8L124.75 96.73L124.04 95.81L123.16 95.53L121.47 95.69L120.68 95.11L121.27 94.16L120.98 93.59L119.6 93L119.72 92.26L121.27 91.84L121.74 91.31L121.47 90.31L122.44 89.84L124.04 90.19L125 90.02L126 89.2L127.25 89.27L127.96 90.19L128.84 90.47L130.53 90.31L131.32 90.89L130.73 91.84L131.02 92.41ZM132.4 90.4L132.28 91.14L130.73 91.56L130.26 92.09L130.53 93.09L129.56 93.56L127.96 93.21L127 93.38L126 94.2L124.75 94.13L124.04 93.21L123.16 92.93L121.47 93.09L120.68 92.51L121.27 91.56L120.98 90.99L119.6 90.4L119.72 89.66L121.27 89.24L121.74 88.71L121.47 87.71L122.44 87.24L124.04 87.59L125 87.42L126 86.6L127.25 86.67L127.96 87.59L128.84 87.87L130.53 87.71L131.32 88.29L130.73 89.24L131.02 89.81Z" fill="#cdcdcd" stroke="#c4c4c4" stroke-width="0.6" stroke-linejoin="round" fill-rule="nonzero"/><polygon points="132.4,90.4 132.28,91.14 130.73,91.56 130.26,92.09 130.53,93.09 129.56,93.56 127.96,93.21 127,93.38 126,94.2 124.75,94.13 124.04,93.21 123.16,92.93 121.47,93.09 120.68,92.51 121.27,91.56 120.98,90.99 119.6,90.4 119.72,89.66 121.27,89.24 121.74,88.71 121.47,87.71 122.44,87.24 124.04,87.59 125,87.42 126,86.6 127.25,86.67 127.96,87.59 128.84,87.87 130.53,87.71 131.32,88.29 130.73,89.24 131.02,89.81" fill="#e4e4e4"/>
<path d="M123.3 83.12L123.3 89.48A2.1 0.92 0 0 0 127.5 89.48L127.5 83.12Z" fill="#cacaca"/><path d="M125.9 83.12L125.9 90.31A2.1 0.92 0 0 0 127.5 89.48L127.5 83.12Z" fill="#bcbcbc"/><ellipse cx="125.4" cy="83.12" rx="2.1" ry="0.92" fill="#d8d8d8"/>
<path d="M127.5 83.5A6 5 0 0 1 132 88" stroke="#d4d4d4" stroke-width="0.8" stroke-dasharray="1.2 1" fill="none"/>
<path d="M129.2 94.7H135.6M132.4 91.5V97.9" stroke="#fff" stroke-width="2.8" fill="none"/><path d="M129.8 94.7H135M132.4 92.1V97.3" stroke="#bdbdbd" stroke-width="1.2" fill="none"/>
<path d="M287.1 40H307.9V49.6H305V67.9H290.1V49.6H287.1Z" fill="#eec41c"/><rect x="287.1" y="40" width="1.8" height="9.6" fill="#dcae08"/><rect x="290.1" y="49.6" width="1.8" height="18.3" fill="#dcae08"/><rect x="289.1" y="40.3" width="1.8" height="9" fill="#fff0c4"/><rect x="292.2" y="49.6" width="1.8" height="18" fill="#fff0c4"/><rect x="290.1" y="66.8" width="14.9" height="1.1" fill="#dcae08" opacity="0.6"/><path d="M291.2 40H302.8V47.7H299.8V64.8H294.2V47.7H291.2Z" fill="#8acafa" stroke="#4a98d8" stroke-width="0.5"/><path d="M297 40.2H302.6V47.5H299.6V64.6H297Z" fill="#62aae2"/>
<rect x="306.2" y="44.1" width="12.7" height="19.7" fill="#f4f4f4"/><path d="M307.34 51V63.8M312.55 48.04V63.8M306.2 53.56H318.9M306.2 58.68H318.9" stroke="#b4b4b4" stroke-width="0.9" fill="none"/><rect x="309.25" y="44.1" width="9.65" height="4.33" fill="#606060"/><path d="M318.4 44.1V63.3H306.2" stroke="#606060" stroke-width="1" fill="none"/>
<path d="M360.6 58.9L360.45 59.8L360.45 56.2L360.6 55.3ZM360.45 59.8L358.59 60.31L358.59 56.71L360.45 56.2ZM358.59 60.31L358.02 60.94L358.02 57.34L358.59 56.71ZM358.02 57.34L358.34 58.55L358.34 62.15L358.02 60.94ZM358.34 62.15L357.18 62.72L357.18 59.12L358.34 58.55ZM357.18 62.72L355.26 62.3L355.26 58.7L357.18 59.12ZM355.26 62.3L354.1 62.51L354.1 58.91L355.26 58.7ZM354.1 62.51L352.9 63.5L352.9 59.9L354.1 58.91ZM352.9 63.5L351.4 63.41L351.4 59.81L352.9 59.9ZM351.4 63.41L350.54 62.3L350.54 58.7L351.4 59.81ZM350.54 62.3L349.48 61.96L349.48 58.36L350.54 58.7ZM349.48 61.96L347.46 62.15L347.46 58.55L349.48 58.36ZM347.46 62.15L346.5 61.46L346.5 57.86L347.46 58.55ZM346.5 57.86L347.21 56.71L347.21 60.31L346.5 61.46ZM347.21 60.31L346.86 59.62L346.86 56.02L347.21 56.71ZM346.86 59.62L345.2 58.9L345.2 55.3L346.86 56.02ZM345.2 55.3L345.35 54.4L345.35 58L345.2 58.9ZM345.35 54.4L347.21 53.89L347.21 57.49L345.35 58ZM347.21 53.89L347.78 53.26L347.78 56.86L347.21 57.49ZM347.78 56.86L347.46 55.65L347.46 52.05L347.78 53.26ZM347.46 52.05L348.62 51.48L348.62 55.08L347.46 55.65ZM348.62 51.48L350.54 51.9L350.54 55.5L348.62 55.08ZM350.54 51.9L351.7 51.69L351.7 55.29L350.54 55.5ZM351.7 51.69L352.9 50.7L352.9 54.3L351.7 55.29ZM352.9 50.7L354.4 50.79L354.4 54.39L352.9 54.3ZM354.4 50.79L355.26 51.9L355.26 55.5L354.4 54.39ZM355.26 51.9L356.32 52.24L356.32 55.84L355.26 55.5ZM356.32 52.24L358.34 52.05L358.34 55.65L356.32 55.84ZM358.34 52.05L359.3 52.74L359.3 56.34L358.34 55.65ZM359.3 56.34L358.59 57.49L358.59 53.89L359.3 52.74ZM358.59 53.89L358.94 54.58L358.94 58.18L358.59 57.49ZM358.94 54.58L360.6 55.3L360.6 58.9L358.94 58.18ZM360.6 58.9L360.45 59.8L358.59 60.31L358.02 60.94L358.34 62.15L357.18 62.72L355.26 62.3L354.1 62.51L352.9 63.5L351.4 63.41L350.54 62.3L349.48 61.96L347.46 62.15L346.5 61.46L347.21 60.31L346.86 59.62L345.2 58.9L345.35 58L347.21 57.49L347.78 56.86L347.46 55.65L348.62 55.08L350.54 55.5L351.7 55.29L352.9 54.3L354.4 54.39L355.26 55.5L356.32 55.84L358.34 55.65L359.3 56.34L358.59 57.49L358.94 58.18ZM360.6 55.3L360.45 56.2L358.59 56.71L358.02 57.34L358.34 58.55L357.18 59.12L355.26 58.7L354.1 58.91L352.9 59.9L351.4 59.81L350.54 58.7L349.48 58.36L347.46 58.55L346.5 57.86L347.21 56.71L346.86 56.02L345.2 55.3L345.35 54.4L347.21 53.89L347.78 53.26L347.46 52.05L348.62 51.48L350.54 51.9L351.7 51.69L352.9 50.7L354.4 50.79L355.26 51.9L356.32 52.24L358.34 52.05L359.3 52.74L358.59 53.89L358.94 54.58Z" fill="#cdcdcd" stroke="#c4c4c4" stroke-width="0.6" stroke-linejoin="round" fill-rule="nonzero"/><polygon points="360.6,55.3 360.45,56.2 358.59,56.71 358.02,57.34 358.34,58.55 357.18,59.12 355.26,58.7 354.1,58.91 352.9,59.9 351.4,59.81 350.54,58.7 349.48,58.36 347.46,58.55 346.5,57.86 347.21,56.71 346.86,56.02 345.2,55.3 345.35,54.4 347.21,53.89 347.78,53.26 347.46,52.05 348.62,51.48 350.54,51.9 351.7,51.69 352.9,50.7 354.4,50.79 355.26,51.9 356.32,52.24 358.34,52.05 359.3,52.74 358.59,53.89 358.94,54.58" fill="#e4e4e4"/>
<path d="M350.2 47.35L350.2 55.15A3.3 1.45 0 0 0 356.8 55.15L356.8 47.35Z" fill="#cacaca"/><path d="M354.29 47.35L354.29 56.45A3.3 1.45 0 0 0 356.8 55.15L356.8 47.35Z" fill="#bcbcbc"/><ellipse cx="353.5" cy="47.35" rx="3.3" ry="1.45" fill="#d8d8d8"/>
<path d="M372.9 64.8L372.74 65.74L372.74 62.14L372.9 61.2ZM372.74 65.74L370.68 66.27L370.68 62.67L372.74 62.14ZM370.68 66.27L370.05 66.93L370.05 63.33L370.68 62.67ZM370.05 63.33L370.41 64.59L370.41 68.19L370.05 66.93ZM370.41 68.19L369.12 68.79L369.12 65.19L370.41 64.59ZM369.12 68.79L367 68.35L367 64.75L369.12 65.19ZM367 68.35L365.73 68.57L365.73 64.97L367 64.75ZM365.73 68.57L364.4 69.6L364.4 66L365.73 64.97ZM364.4 69.6L362.74 69.51L362.74 65.91L364.4 66ZM362.74 69.51L361.8 68.35L361.8 64.75L362.74 65.91ZM361.8 68.35L360.62 67.99L360.62 64.39L361.8 64.75ZM360.62 67.99L358.39 68.19L358.39 64.59L360.62 64.39ZM358.39 68.19L357.33 67.47L357.33 63.87L358.39 64.59ZM357.33 63.87L358.12 62.67L358.12 66.27L357.33 67.47ZM358.12 66.27L357.73 65.55L357.73 61.95L358.12 62.67ZM357.73 65.55L355.9 64.8L355.9 61.2L357.73 61.95ZM355.9 61.2L356.06 60.26L356.06 63.86L355.9 64.8ZM356.06 60.26L358.12 59.73L358.12 63.33L356.06 63.86ZM358.12 59.73L358.75 59.07L358.75 62.67L358.12 63.33ZM358.75 62.67L358.39 61.41L358.39 57.81L358.75 59.07ZM358.39 57.81L359.68 57.21L359.68 60.81L358.39 61.41ZM359.68 57.21L361.8 57.65L361.8 61.25L359.68 60.81ZM361.8 57.65L363.07 57.43L363.07 61.03L361.8 61.25ZM363.07 57.43L364.4 56.4L364.4 60L363.07 61.03ZM364.4 56.4L366.06 56.49L366.06 60.09L364.4 60ZM366.06 56.49L367 57.65L367 61.25L366.06 60.09ZM367 57.65L368.18 58.01L368.18 61.61L367 61.25ZM368.18 58.01L370.41 57.81L370.41 61.41L368.18 61.61ZM370.41 57.81L371.47 58.53L371.47 62.13L370.41 61.41ZM371.47 62.13L370.68 63.33L370.68 59.73L371.47 58.53ZM370.68 59.73L371.07 60.45L371.07 64.05L370.68 63.33ZM371.07 60.45L372.9 61.2L372.9 64.8L371.07 64.05ZM372.9 64.8L372.74 65.74L370.68 66.27L370.05 66.93L370.41 68.19L369.12 68.79L367 68.35L365.73 68.57L364.4 69.6L362.74 69.51L361.8 68.35L360.62 67.99L358.39 68.19L357.33 67.47L358.12 66.27L357.73 65.55L355.9 64.8L356.06 63.86L358.12 63.33L358.75 62.67L358.39 61.41L359.68 60.81L361.8 61.25L363.07 61.03L364.4 60L366.06 60.09L367 61.25L368.18 61.61L370.41 61.41L371.47 62.13L370.68 63.33L371.07 64.05ZM372.9 61.2L372.74 62.14L370.68 62.67L370.05 63.33L370.41 64.59L369.12 65.19L367 64.75L365.73 64.97L364.4 66L362.74 65.91L361.8 64.75L360.62 64.39L358.39 64.59L357.33 63.87L358.12 62.67L357.73 61.95L355.9 61.2L356.06 60.26L358.12 59.73L358.75 59.07L358.39 57.81L359.68 57.21L361.8 57.65L363.07 57.43L364.4 56.4L366.06 56.49L367 57.65L368.18 58.01L370.41 57.81L371.47 58.53L370.68 59.73L371.07 60.45Z" fill="#cdcdcd" stroke="#c4c4c4" stroke-width="0.6" stroke-linejoin="round" fill-rule="nonzero"/><polygon points="372.9,61.2 372.74,62.14 370.68,62.67 370.05,63.33 370.41,64.59 369.12,65.19 367,64.75 365.73,64.97 364.4,66 362.74,65.91 361.8,64.75 360.62,64.39 358.39,64.59 357.33,63.87 358.12,62.67 357.73,61.95 355.9,61.2 356.06,60.26 358.12,59.73 358.75,59.07 358.39,57.81 359.68,57.21 361.8,57.65 363.07,57.43 364.4,56.4 366.06,56.49 367,57.65 368.18,58.01 370.41,57.81 371.47,58.53 370.68,59.73 371.07,60.45" fill="#e4e4e4"/>
<path d="M361 53.62L361 61.08A3.45 1.52 0 0 0 367.9 61.08L367.9 53.62Z" fill="#cacaca"/><path d="M365.28 53.62L365.28 62.45A3.45 1.52 0 0 0 367.9 61.08L367.9 53.62Z" fill="#bcbcbc"/><ellipse cx="364.45" cy="53.62" rx="3.45" ry="1.52" fill="#d8d8d8"/>
<path d="M376.6 43V51.2A3.9 3.9 0 0 1 368.8 51.2V41.9A3.9 3.9 0 0 1 376.6 41.9V46.8A2.3 2.3 0 0 1 372 46.8V42.5" stroke="#c2c2c2" stroke-width="0.9" fill="none"/>
<polygon points="358,90 363,90 360.5,92.8" fill="#bdbdbd"/>
<path d="M399.8 49.9L399.67 50.6L399.67 48L399.8 47.3ZM399.67 50.6L398.03 51L398.03 48.4L399.67 48ZM398.03 51L397.52 51.5L397.52 48.9L398.03 48.4ZM397.52 48.9L397.81 49.85L397.81 52.45L397.52 51.5ZM397.81 52.45L396.78 52.89L396.78 50.29L397.81 49.85ZM396.78 52.89L395.08 52.56L395.08 49.96L396.78 50.29ZM395.08 52.56L394.06 52.72L394.06 50.12L395.08 49.96ZM394.06 52.72L393 53.5L393 50.9L394.06 50.12ZM393 53.5L391.67 53.43L391.67 50.83L393 50.9ZM391.67 53.43L390.92 52.56L390.92 49.96L391.67 50.83ZM390.92 52.56L389.98 52.29L389.98 49.69L390.92 49.96ZM389.98 52.29L388.19 52.45L388.19 49.85L389.98 49.69ZM388.19 52.45L387.35 51.9L387.35 49.3L388.19 49.85ZM387.35 49.3L387.97 48.4L387.97 51L387.35 51.9ZM387.97 51L387.66 50.46L387.66 47.86L387.97 48.4ZM387.66 50.46L386.2 49.9L386.2 47.3L387.66 47.86ZM386.2 47.3L386.33 46.6L386.33 49.2L386.2 49.9ZM386.33 46.6L387.97 46.2L387.97 48.8L386.33 49.2ZM387.97 46.2L388.48 45.7L388.48 48.3L387.97 48.8ZM388.48 48.3L388.19 47.35L388.19 44.75L388.48 45.7ZM388.19 44.75L389.22 44.31L389.22 46.91L388.19 47.35ZM389.22 44.31L390.92 44.64L390.92 47.24L389.22 46.91ZM390.92 44.64L391.94 44.48L391.94 47.08L390.92 47.24ZM391.94 44.48L393 43.7L393 46.3L391.94 47.08ZM393 43.7L394.33 43.77L394.33 46.37L393 46.3ZM394.33 43.77L395.08 44.64L395.08 47.24L394.33 46.37ZM395.08 44.64L396.02 44.91L396.02 47.51L395.08 47.24ZM396.02 44.91L397.81 44.75L397.81 47.35L396.02 47.51ZM397.81 44.75L398.65 45.3L398.65 47.9L397.81 47.35ZM398.65 47.9L398.03 48.8L398.03 46.2L398.65 45.3ZM398.03 46.2L398.34 46.74L398.34 49.34L398.03 48.8ZM398.34 46.74L399.8 47.3L399.8 49.9L398.34 49.34ZM399.8 49.9L399.67 50.6L398.03 51L397.52 51.5L397.81 52.45L396.78 52.89L395.08 52.56L394.06 52.72L393 53.5L391.67 53.43L390.92 52.56L389.98 52.29L388.19 52.45L387.35 51.9L387.97 51L387.66 50.46L386.2 49.9L386.33 49.2L387.97 48.8L388.48 48.3L388.19 47.35L389.22 46.91L390.92 47.24L391.94 47.08L393 46.3L394.33 46.37L395.08 47.24L396.02 47.51L397.81 47.35L398.65 47.9L398.03 48.8L398.34 49.34ZM399.8 47.3L399.67 48L398.03 48.4L397.52 48.9L397.81 49.85L396.78 50.29L395.08 49.96L394.06 50.12L393 50.9L391.67 50.83L390.92 49.96L389.98 49.69L388.19 49.85L387.35 49.3L387.97 48.4L387.66 47.86L386.2 47.3L386.33 46.6L387.97 46.2L388.48 45.7L388.19 44.75L389.22 44.31L390.92 44.64L391.94 44.48L393 43.7L394.33 43.77L395.08 44.64L396.02 44.91L397.81 44.75L398.65 45.3L398.03 46.2L398.34 46.74Z" fill="#cdcdcd" stroke="#c4c4c4" stroke-width="0.6" stroke-linejoin="round" fill-rule="nonzero"/><polygon points="399.8,47.3 399.67,48 398.03,48.4 397.52,48.9 397.81,49.85 396.78,50.29 395.08,49.96 394.06,50.12 393,50.9 391.67,50.83 390.92,49.96 389.98,49.69 388.19,49.85 387.35,49.3 387.97,48.4 387.66,47.86 386.2,47.3 386.33,46.6 387.97,46.2 388.48,45.7 388.19,44.75 389.22,44.31 390.92,44.64 391.94,44.48 393,43.7 394.33,43.77 395.08,44.64 396.02,44.91 397.81,44.75 398.65,45.3 398.03,46.2 398.34,46.74" fill="#e4e4e4"/>
<ellipse cx="393" cy="47.3" rx="2" ry="1.1" fill="#c8c8c8"/>
<path d="M391.2 39.19L391.2 43.51A1.8 0.79 0 0 0 394.8 43.51L394.8 39.19Z" fill="#cacaca"/><path d="M393.43 39.19L393.43 44.22A1.8 0.79 0 0 0 394.8 43.51L394.8 39.19Z" fill="#bcbcbc"/><ellipse cx="393" cy="39.19" rx="1.8" ry="0.79" fill="#d8d8d8"/>
<path d="M388.4 38.6V41.4M387.2 39.9H389.6M397.6 38.8V41.6M396.4 40.4H398.8" stroke="#c4c4c4" stroke-width="0.8" fill="none"/>
<path d="M399.8 71.8L399.67 72.5L399.67 69.9L399.8 69.2ZM399.67 72.5L398.03 72.9L398.03 70.3L399.67 69.9ZM398.03 72.9L397.52 73.4L397.52 70.8L398.03 70.3ZM397.52 70.8L397.81 71.75L397.81 74.35L397.52 73.4ZM397.81 74.35L396.78 74.79L396.78 72.19L397.81 71.75ZM396.78 74.79L395.08 74.46L395.08 71.86L396.78 72.19ZM395.08 74.46L394.06 74.62L394.06 72.02L395.08 71.86ZM394.06 74.62L393 75.4L393 72.8L394.06 72.02ZM393 75.4L391.67 75.33L391.67 72.73L393 72.8ZM391.67 75.33L390.92 74.46L390.92 71.86L391.67 72.73ZM390.92 74.46L389.98 74.19L389.98 71.59L390.92 71.86ZM389.98 74.19L388.19 74.35L388.19 71.75L389.98 71.59ZM388.19 74.35L387.35 73.8L387.35 71.2L388.19 71.75ZM387.35 71.2L387.97 70.3L387.97 72.9L387.35 73.8ZM387.97 72.9L387.66 72.36L387.66 69.76L387.97 70.3ZM387.66 72.36L386.2 71.8L386.2 69.2L387.66 69.76ZM386.2 69.2L386.33 68.5L386.33 71.1L386.2 71.8ZM386.33 68.5L387.97 68.1L387.97 70.7L386.33 71.1ZM387.97 68.1L388.48 67.6L388.48 70.2L387.97 70.7ZM388.48 70.2L388.19 69.25L388.19 66.65L388.48 67.6ZM388.19 66.65L389.22 66.21L389.22 68.81L388.19 69.25ZM389.22 66.21L390.92 66.54L390.92 69.14L389.22 68.81ZM390.92 66.54L391.94 66.38L391.94 68.98L390.92 69.14ZM391.94 66.38L393 65.6L393 68.2L391.94 68.98ZM393 65.6L394.33 65.67L394.33 68.27L393 68.2ZM394.33 65.67L395.08 66.54L395.08 69.14L394.33 68.27ZM395.08 66.54L396.02 66.81L396.02 69.41L395.08 69.14ZM396.02 66.81L397.81 66.65L397.81 69.25L396.02 69.41ZM397.81 66.65L398.65 67.2L398.65 69.8L397.81 69.25ZM398.65 69.8L398.03 70.7L398.03 68.1L398.65 67.2ZM398.03 68.1L398.34 68.64L398.34 71.24L398.03 70.7ZM398.34 68.64L399.8 69.2L399.8 71.8L398.34 71.24ZM399.8 71.8L399.67 72.5L398.03 72.9L397.52 73.4L397.81 74.35L396.78 74.79L395.08 74.46L394.06 74.62L393 75.4L391.67 75.33L390.92 74.46L389.98 74.19L388.19 74.35L387.35 73.8L387.97 72.9L387.66 72.36L386.2 71.8L386.33 71.1L387.97 70.7L388.48 70.2L388.19 69.25L389.22 68.81L390.92 69.14L391.94 68.98L393 68.2L394.33 68.27L395.08 69.14L396.02 69.41L397.81 69.25L398.65 69.8L398.03 70.7L398.34 71.24ZM399.8 69.2L399.67 69.9L398.03 70.3L397.52 70.8L397.81 71.75L396.78 72.19L395.08 71.86L394.06 72.02L393 72.8L391.67 72.73L390.92 71.86L389.98 71.59L388.19 71.75L387.35 71.2L387.97 70.3L387.66 69.76L386.2 69.2L386.33 68.5L387.97 68.1L388.48 67.6L388.19 66.65L389.22 66.21L390.92 66.54L391.94 66.38L393 65.6L394.33 65.67L395.08 66.54L396.02 66.81L397.81 66.65L398.65 67.2L398.03 68.1L398.34 68.64Z" fill="#cdcdcd" stroke="#c4c4c4" stroke-width="0.6" stroke-linejoin="round" fill-rule="nonzero"/><polygon points="399.8,69.2 399.67,69.9 398.03,70.3 397.52,70.8 397.81,71.75 396.78,72.19 395.08,71.86 394.06,72.02 393,72.8 391.67,72.73 390.92,71.86 389.98,71.59 388.19,71.75 387.35,71.2 387.97,70.3 387.66,69.76 386.2,69.2 386.33,68.5 387.97,68.1 388.48,67.6 388.19,66.65 389.22,66.21 390.92,66.54 391.94,66.38 393,65.6 394.33,65.67 395.08,66.54 396.02,66.81 397.81,66.65 398.65,67.2 398.03,68.1 398.34,68.64" fill="#e4e4e4"/>
<ellipse cx="393" cy="69.2" rx="2" ry="1.1" fill="#c8c8c8"/>
<path d="M387.4 61.6A6.5 3 0 0 0 398 62" stroke="#c4c4c4" stroke-width="0.8" fill="none"/>
<polygon points="396.5,61 398.8,61 398.8,63.4" fill="#c4c4c4"/>
<rect x="391.4" y="61" width="3" height="1.6" fill="#d0d0d0"/>
<path d="M393.7 88.6L393.56 89.27L393.56 87.27L393.7 86.6ZM393.56 89.27L392.41 89.64L392.41 87.64L393.56 87.27ZM392.41 89.64L391.88 90.07L391.88 88.07L392.41 87.64ZM391.88 90.07L391.6 90.85L391.6 88.85L391.88 88.07ZM391.6 90.85L390.59 91.11L390.59 89.11L391.6 88.85ZM390.59 91.11L389.5 90.68L389.5 88.68L390.59 89.11ZM389.5 90.68L388.63 90.61L388.63 88.61L389.5 88.68ZM388.63 90.61L387.4 90.85L387.4 88.85L388.63 88.61ZM387.4 90.85L386.53 90.44L386.53 88.44L387.4 88.85ZM386.53 88.44L386.59 87.64L386.59 89.64L386.53 90.44ZM386.59 89.64L386.25 89.14L386.25 87.14L386.59 87.64ZM386.25 89.14L385.3 88.6L385.3 86.6L386.25 87.14ZM385.3 86.6L385.44 85.93L385.44 87.93L385.3 88.6ZM385.44 85.93L386.59 85.56L386.59 87.56L385.44 87.93ZM386.59 85.56L387.12 85.13L387.12 87.13L386.59 87.56ZM387.12 85.13L387.4 84.35L387.4 86.35L387.12 87.13ZM387.4 84.35L388.41 84.09L388.41 86.09L387.4 86.35ZM388.41 84.09L389.5 84.52L389.5 86.52L388.41 86.09ZM389.5 84.52L390.37 84.59L390.37 86.59L389.5 86.52ZM390.37 84.59L391.6 84.35L391.6 86.35L390.37 86.59ZM391.6 84.35L392.47 84.76L392.47 86.76L391.6 86.35ZM392.47 86.76L392.41 87.56L392.41 85.56L392.47 84.76ZM392.41 85.56L392.75 86.06L392.75 88.06L392.41 87.56ZM392.75 86.06L393.7 86.6L393.7 88.6L392.75 88.06ZM393.7 88.6L393.56 89.27L392.41 89.64L391.88 90.07L391.6 90.85L390.59 91.11L389.5 90.68L388.63 90.61L387.4 90.85L386.53 90.44L386.59 89.64L386.25 89.14L385.3 88.6L385.44 87.93L386.59 87.56L387.12 87.13L387.4 86.35L388.41 86.09L389.5 86.52L390.37 86.59L391.6 86.35L392.47 86.76L392.41 87.56L392.75 88.06ZM393.7 86.6L393.56 87.27L392.41 87.64L391.88 88.07L391.6 88.85L390.59 89.11L389.5 88.68L388.63 88.61L387.4 88.85L386.53 88.44L386.59 87.64L386.25 87.14L385.3 86.6L385.44 85.93L386.59 85.56L387.12 85.13L387.4 84.35L388.41 84.09L389.5 84.52L390.37 84.59L391.6 84.35L392.47 84.76L392.41 85.56L392.75 86.06Z" fill="#cdcdcd" stroke="#c4c4c4" stroke-width="0.6" stroke-linejoin="round" fill-rule="nonzero"/><polygon points="393.7,86.6 393.56,87.27 392.41,87.64 391.88,88.07 391.6,88.85 390.59,89.11 389.5,88.68 388.63,88.61 387.4,88.85 386.53,88.44 386.59,87.64 386.25,87.14 385.3,86.6 385.44,85.93 386.59,85.56 387.12,85.13 387.4,84.35 388.41,84.09 389.5,84.52 390.37,84.59 391.6,84.35 392.47,84.76 392.41,85.56 392.75,86.06" fill="#e4e4e4"/>
<path d="M388 83.02L388 86.38A1.4 0.62 0 0 0 390.8 86.38L390.8 83.02Z" fill="#cacaca"/><path d="M389.74 83.02L389.74 86.94A1.4 0.62 0 0 0 390.8 86.38L390.8 83.02Z" fill="#bcbcbc"/><ellipse cx="389.4" cy="83.02" rx="1.4" ry="0.62" fill="#d8d8d8"/>
<path d="M398.4 90.4L398.26 91.05L398.26 89.05L398.4 88.4ZM398.26 91.05L397.17 91.4L397.17 89.4L398.26 89.05ZM397.17 91.4L396.66 91.81L396.66 89.81L397.17 89.4ZM396.66 91.81L396.4 92.57L396.4 90.57L396.66 89.81ZM396.4 92.57L395.44 92.81L395.44 90.81L396.4 90.57ZM395.44 92.81L394.4 92.4L394.4 90.4L395.44 90.81ZM394.4 92.4L393.57 92.33L393.57 90.33L394.4 90.4ZM393.57 92.33L392.4 92.57L392.4 90.57L393.57 90.33ZM392.4 92.57L391.57 92.17L391.57 90.17L392.4 90.57ZM391.57 90.17L391.63 89.4L391.63 91.4L391.57 92.17ZM391.63 91.4L391.31 90.92L391.31 88.92L391.63 89.4ZM391.31 90.92L390.4 90.4L390.4 88.4L391.31 88.92ZM390.4 88.4L390.54 87.75L390.54 89.75L390.4 90.4ZM390.54 87.75L391.63 87.4L391.63 89.4L390.54 89.75ZM391.63 87.4L392.14 86.99L392.14 88.99L391.63 89.4ZM392.14 86.99L392.4 86.23L392.4 88.23L392.14 88.99ZM392.4 86.23L393.36 85.99L393.36 87.99L392.4 88.23ZM393.36 85.99L394.4 86.4L394.4 88.4L393.36 87.99ZM394.4 86.4L395.23 86.47L395.23 88.47L394.4 88.4ZM395.23 86.47L396.4 86.23L396.4 88.23L395.23 88.47ZM396.4 86.23L397.23 86.63L397.23 88.63L396.4 88.23ZM397.23 88.63L397.17 89.4L397.17 87.4L397.23 86.63ZM397.17 87.4L397.49 87.88L397.49 89.88L397.17 89.4ZM397.49 87.88L398.4 88.4L398.4 90.4L397.49 89.88ZM398.4 90.4L398.26 91.05L397.17 91.4L396.66 91.81L396.4 92.57L395.44 92.81L394.4 92.4L393.57 92.33L392.4 92.57L391.57 92.17L391.63 91.4L391.31 90.92L390.4 90.4L390.54 89.75L391.63 89.4L392.14 88.99L392.4 88.23L393.36 87.99L394.4 88.4L395.23 88.47L396.4 88.23L397.23 88.63L397.17 89.4L397.49 89.88ZM398.4 88.4L398.26 89.05L397.17 89.4L396.66 89.81L396.4 90.57L395.44 90.81L394.4 90.4L393.57 90.33L392.4 90.57L391.57 90.17L391.63 89.4L391.31 88.92L390.4 88.4L390.54 87.75L391.63 87.4L392.14 86.99L392.4 86.23L393.36 85.99L394.4 86.4L395.23 86.47L396.4 86.23L397.23 86.63L397.17 87.4L397.49 87.88Z" fill="#cdcdcd" stroke="#c4c4c4" stroke-width="0.6" stroke-linejoin="round" fill-rule="nonzero"/><polygon points="398.4,88.4 398.26,89.05 397.17,89.4 396.66,89.81 396.4,90.57 395.44,90.81 394.4,90.4 393.57,90.33 392.4,90.57 391.57,90.17 391.63,89.4 391.31,88.92 390.4,88.4 390.54,87.75 391.63,87.4 392.14,86.99 392.4,86.23 393.36,85.99 394.4,86.4 395.23,86.47 396.4,86.23 397.23,86.63 397.17,87.4 397.49,87.88" fill="#e4e4e4"/>
<path d="M393.2 84.97L393.2 88.23A1.3 0.57 0 0 0 395.8 88.23L395.8 84.97Z" fill="#cacaca"/><path d="M394.81 84.97L394.81 88.74A1.3 0.57 0 0 0 395.8 88.23L395.8 84.97Z" fill="#bcbcbc"/><ellipse cx="394.5" cy="84.97" rx="1.3" ry="0.57" fill="#d8d8d8"/>
<circle cx="398.2" cy="93.1" r="2.4" fill="#fff" stroke="#c0c0c0" stroke-width="0.9"/>
<path d="M396.5 95L393.8 97.6" stroke="#bcbcbc" stroke-width="1.3" fill="none"/>
<path d="M526.4 43.6V39.4H531.2L532.2 40.4" stroke="#484848" stroke-width="0.9" fill="none"/>
<path d="M529.4 42.4H534.2L536.6 44.8V51.6H529.4Z" fill="#f0f0f0" stroke="#484848" stroke-width="0.9"/>
<path d="M534.2 42.4V44.8H536.6" fill="none" stroke="#484848" stroke-width="0.7"/>
<path d="M530.4 50.2L530.26 50.85L530.26 48.85L530.4 48.2ZM530.26 50.85L529.14 51.2L529.14 49.2L530.26 48.85ZM529.14 51.2L528.62 51.61L528.62 49.61L529.14 49.2ZM528.62 51.61L528.35 52.37L528.35 50.37L528.62 49.61ZM528.35 52.37L527.36 52.61L527.36 50.61L528.35 50.37ZM527.36 52.61L526.3 52.2L526.3 50.2L527.36 50.61ZM526.3 52.2L525.45 52.13L525.45 50.13L526.3 50.2ZM525.45 52.13L524.25 52.37L524.25 50.37L525.45 50.13ZM524.25 52.37L523.4 51.97L523.4 49.97L524.25 50.37ZM523.4 49.97L523.46 49.2L523.46 51.2L523.4 51.97ZM523.46 51.2L523.13 50.72L523.13 48.72L523.46 49.2ZM523.13 50.72L522.2 50.2L522.2 48.2L523.13 48.72ZM522.2 48.2L522.34 47.55L522.34 49.55L522.2 50.2ZM522.34 47.55L523.46 47.2L523.46 49.2L522.34 49.55ZM523.46 47.2L523.98 46.79L523.98 48.79L523.46 49.2ZM523.98 46.79L524.25 46.03L524.25 48.03L523.98 48.79ZM524.25 46.03L525.24 45.79L525.24 47.79L524.25 48.03ZM525.24 45.79L526.3 46.2L526.3 48.2L525.24 47.79ZM526.3 46.2L527.15 46.27L527.15 48.27L526.3 48.2ZM527.15 46.27L528.35 46.03L528.35 48.03L527.15 48.27ZM528.35 46.03L529.2 46.43L529.2 48.43L528.35 48.03ZM529.2 48.43L529.14 49.2L529.14 47.2L529.2 46.43ZM529.14 47.2L529.47 47.68L529.47 49.68L529.14 49.2ZM529.47 47.68L530.4 48.2L530.4 50.2L529.47 49.68ZM530.4 50.2L530.26 50.85L529.14 51.2L528.62 51.61L528.35 52.37L527.36 52.61L526.3 52.2L525.45 52.13L524.25 52.37L523.4 51.97L523.46 51.2L523.13 50.72L522.2 50.2L522.34 49.55L523.46 49.2L523.98 48.79L524.25 48.03L525.24 47.79L526.3 48.2L527.15 48.27L528.35 48.03L529.2 48.43L529.14 49.2L529.47 49.68ZM530.4 48.2L530.26 48.85L529.14 49.2L528.62 49.61L528.35 50.37L527.36 50.61L526.3 50.2L525.45 50.13L524.25 50.37L523.4 49.97L523.46 49.2L523.13 48.72L522.2 48.2L522.34 47.55L523.46 47.2L523.98 46.79L524.25 46.03L525.24 45.79L526.3 46.2L527.15 46.27L528.35 46.03L529.2 46.43L529.14 47.2L529.47 47.68Z" fill="#cfa81c" stroke="#b89414" stroke-width="0.6" stroke-linejoin="round" fill-rule="nonzero"/><polygon points="530.4,48.2 530.26,48.85 529.14,49.2 528.62,49.61 528.35,50.37 527.36,50.61 526.3,50.2 525.45,50.13 524.25,50.37 523.4,49.97 523.46,49.2 523.13,48.72 522.2,48.2 522.34,47.55 523.46,47.2 523.98,46.79 524.25,46.03 525.24,45.79 526.3,46.2 527.15,46.27 528.35,46.03 529.2,46.43 529.14,47.2 529.47,47.68" fill="#f6e284"/>
<path d="M524.5 44.45L524.5 48.15A1.7 0.75 0 0 0 527.9 48.15L527.9 44.45Z" fill="#8e8e8e"/><path d="M526.61 44.45L526.61 48.83A1.7 0.75 0 0 0 527.9 48.15L527.9 44.45Z" fill="#747474"/><ellipse cx="526.2" cy="44.45" rx="1.7" ry="0.75" fill="#b2b2b2"/>
<path d="M529.5 66.1L529.37 66.7L529.37 64.8L529.5 64.2ZM529.37 66.7L528.36 67.02L528.36 65.12L529.37 64.8ZM528.36 67.02L527.89 67.4L527.89 65.5L528.36 65.12ZM527.89 67.4L527.65 68.09L527.65 66.19L527.89 65.5ZM527.65 68.09L526.76 68.32L526.76 66.42L527.65 66.19ZM526.76 68.32L525.8 67.94L525.8 66.04L526.76 66.42ZM525.8 67.94L525.03 67.88L525.03 65.98L525.8 66.04ZM525.03 67.88L523.95 68.09L523.95 66.19L525.03 65.98ZM523.95 68.09L523.18 67.73L523.18 65.83L523.95 66.19ZM523.18 65.83L523.24 65.12L523.24 67.02L523.18 67.73ZM523.24 67.02L522.94 66.58L522.94 64.68L523.24 65.12ZM522.94 66.58L522.1 66.1L522.1 64.2L522.94 64.68ZM522.1 64.2L522.23 63.6L522.23 65.5L522.1 66.1ZM522.23 63.6L523.24 63.28L523.24 65.18L522.23 65.5ZM523.24 63.28L523.71 62.9L523.71 64.8L523.24 65.18ZM523.71 62.9L523.95 62.21L523.95 64.11L523.71 64.8ZM523.95 62.21L524.84 61.98L524.84 63.88L523.95 64.11ZM524.84 61.98L525.8 62.36L525.8 64.26L524.84 63.88ZM525.8 62.36L526.57 62.42L526.57 64.32L525.8 64.26ZM526.57 62.42L527.65 62.21L527.65 64.11L526.57 64.32ZM527.65 62.21L528.42 62.57L528.42 64.47L527.65 64.11ZM528.42 64.47L528.36 65.18L528.36 63.28L528.42 62.57ZM528.36 63.28L528.66 63.72L528.66 65.62L528.36 65.18ZM528.66 63.72L529.5 64.2L529.5 66.1L528.66 65.62ZM529.5 66.1L529.37 66.7L528.36 67.02L527.89 67.4L527.65 68.09L526.76 68.32L525.8 67.94L525.03 67.88L523.95 68.09L523.18 67.73L523.24 67.02L522.94 66.58L522.1 66.1L522.23 65.5L523.24 65.18L523.71 64.8L523.95 64.11L524.84 63.88L525.8 64.26L526.57 64.32L527.65 64.11L528.42 64.47L528.36 65.18L528.66 65.62ZM529.5 64.2L529.37 64.8L528.36 65.12L527.89 65.5L527.65 66.19L526.76 66.42L525.8 66.04L525.03 65.98L523.95 66.19L523.18 65.83L523.24 65.12L522.94 64.68L522.1 64.2L522.23 63.6L523.24 63.28L523.71 62.9L523.95 62.21L524.84 61.98L525.8 62.36L526.57 62.42L527.65 62.21L528.42 62.57L528.36 63.28L528.66 63.72Z" fill="#cfa81c" stroke="#b89414" stroke-width="0.6" stroke-linejoin="round" fill-rule="nonzero"/><polygon points="529.5,64.2 529.37,64.8 528.36,65.12 527.89,65.5 527.65,66.19 526.76,66.42 525.8,66.04 525.03,65.98 523.95,66.19 523.18,65.83 523.24,65.12 522.94,64.68 522.1,64.2 522.23,63.6 523.24,63.28 523.71,62.9 523.95,62.21 524.84,61.98 525.8,62.36 526.57,62.42 527.65,62.21 528.42,62.57 528.36,63.28 528.66,63.72" fill="#f6e284"/>
<path d="M524.2 60.95L524.2 64.05A1.7 0.75 0 0 0 527.6 64.05L527.6 60.95Z" fill="#8e8e8e"/><path d="M526.31 60.95L526.31 64.73A1.7 0.75 0 0 0 527.6 64.05L527.6 60.95Z" fill="#747474"/><ellipse cx="525.9" cy="60.95" rx="1.7" ry="0.75" fill="#b2b2b2"/>
<path d="M533.5 69L533.4 69.49L533.4 67.89L533.5 67.4ZM533.4 69.49L532.58 69.76L532.58 68.16L533.4 67.89ZM532.58 69.76L532.2 70.07L532.2 68.47L532.58 68.16ZM532.2 70.07L532 70.65L532 69.05L532.2 68.47ZM532 70.65L531.28 70.84L531.28 69.24L532 69.05ZM531.28 70.84L530.5 70.52L530.5 68.92L531.28 69.24ZM530.5 70.52L529.88 70.47L529.88 68.87L530.5 68.92ZM529.88 70.47L529 70.65L529 69.05L529.88 68.87ZM529 70.65L528.38 70.34L528.38 68.74L529 69.05ZM528.38 68.74L528.42 68.16L528.42 69.76L528.38 70.34ZM528.42 69.76L528.18 69.39L528.18 67.79L528.42 68.16ZM528.18 69.39L527.5 69L527.5 67.4L528.18 67.79ZM527.5 67.4L527.6 66.91L527.6 68.51L527.5 69ZM527.6 66.91L528.42 66.64L528.42 68.24L527.6 68.51ZM528.42 66.64L528.8 66.33L528.8 67.93L528.42 68.24ZM528.8 66.33L529 65.75L529 67.35L528.8 67.93ZM529 65.75L529.72 65.56L529.72 67.16L529 67.35ZM529.72 65.56L530.5 65.88L530.5 67.48L529.72 67.16ZM530.5 65.88L531.12 65.93L531.12 67.53L530.5 67.48ZM531.12 65.93L532 65.75L532 67.35L531.12 67.53ZM532 65.75L532.62 66.06L532.62 67.66L532 67.35ZM532.62 67.66L532.58 68.24L532.58 66.64L532.62 66.06ZM532.58 66.64L532.82 67.01L532.82 68.61L532.58 68.24ZM532.82 67.01L533.5 67.4L533.5 69L532.82 68.61ZM533.5 69L533.4 69.49L532.58 69.76L532.2 70.07L532 70.65L531.28 70.84L530.5 70.52L529.88 70.47L529 70.65L528.38 70.34L528.42 69.76L528.18 69.39L527.5 69L527.6 68.51L528.42 68.24L528.8 67.93L529 67.35L529.72 67.16L530.5 67.48L531.12 67.53L532 67.35L532.62 67.66L532.58 68.24L532.82 68.61ZM533.5 67.4L533.4 67.89L532.58 68.16L532.2 68.47L532 69.05L531.28 69.24L530.5 68.92L529.88 68.87L529 69.05L528.38 68.74L528.42 68.16L528.18 67.79L527.5 67.4L527.6 66.91L528.42 66.64L528.8 66.33L529 65.75L529.72 65.56L530.5 65.88L531.12 65.93L532 65.75L532.62 66.06L532.58 66.64L532.82 67.01Z" fill="#4a9cdc" stroke="#3e8ccc" stroke-width="0.6" stroke-linejoin="round" fill-rule="nonzero"/><polygon points="533.5,67.4 533.4,67.89 532.58,68.16 532.2,68.47 532,69.05 531.28,69.24 530.5,68.92 529.88,68.87 529,69.05 528.38,68.74 528.42,68.16 528.18,67.79 527.5,67.4 527.6,66.91 528.42,66.64 528.8,66.33 529,65.75 529.72,65.56 530.5,65.88 531.12,65.93 532,65.75 532.62,66.06 532.58,66.64 532.82,67.01" fill="#8ccaf8"/>
<path d="M530.2 63.66L530.2 65.94A1.5 0.66 0 0 0 533.2 65.94L533.2 63.66Z" fill="#cacaca"/><path d="M532.06 63.66L532.06 66.53A1.5 0.66 0 0 0 533.2 65.94L533.2 63.66Z" fill="#bcbcbc"/><ellipse cx="531.7" cy="63.66" rx="1.5" ry="0.66" fill="#d8d8d8"/>
<circle cx="534.2" cy="71.8" r="4.6" fill="#fff"/>
<path d="M531.2 74.2A3.6 3.6 0 0 1 532.6 68.6" stroke="#22b04c" stroke-width="1.5" fill="none"/>
<polygon points="531.6,67.4 535.4,67.6 533.2,70.6" fill="#22b04c"/>
<path d="M537.2 69.4A3.6 3.6 0 0 1 535.8 75" stroke="#22b04c" stroke-width="1.5" fill="none"/>
<polygon points="536.8,76.2 533,76 535.2,73" fill="#22b04c"/>
<path d="M522.2 83.3H532.6V88.1H531.15V97.25H523.7V88.1H522.2Z" fill="#eec41c"/><rect x="522.2" y="83.3" width="0.9" height="4.8" fill="#dcae08"/><rect x="523.7" y="88.1" width="0.9" height="9.15" fill="#dcae08"/><rect x="523.2" y="83.45" width="0.9" height="4.5" fill="#fff0c4"/><rect x="524.75" y="88.1" width="0.9" height="9" fill="#fff0c4"/><rect x="523.7" y="96.7" width="7.45" height="0.55" fill="#dcae08" opacity="0.6"/><path d="M524.25 83.3H530.05V87.15H528.55V95.7H525.75V87.15H524.25Z" fill="#8acafa" stroke="#4a98d8" stroke-width="0.25"/><path d="M527.15 83.4H529.95V87.05H528.45V95.6H527.15Z" fill="#62aae2"/>
<rect x="532.2" y="85.2" width="5.8" height="9.6" fill="#f4f4f4"/><path d="M532.72 88.56V94.8M535.1 87.12V94.8M532.2 89.81H538M532.2 92.3H538" stroke="#b4b4b4" stroke-width="0.72" fill="none"/><rect x="533.59" y="85.2" width="4.41" height="2.11" fill="#606060"/><path d="M537.6 85.2V94.4H532.2" stroke="#606060" stroke-width="0.8" fill="none"/>
<path d="M745.8 38.2H766.6V47.8H763.7V66.1H748.8V47.8H745.8Z" fill="#dedede"/><rect x="745.8" y="38.2" width="1.8" height="9.6" fill="#d0d0d0"/><rect x="748.8" y="47.8" width="1.8" height="18.3" fill="#d0d0d0"/><rect x="747.8" y="38.5" width="1.8" height="9" fill="#f2f2f2"/><rect x="750.9" y="47.8" width="1.8" height="18" fill="#f2f2f2"/><rect x="748.8" y="65" width="14.9" height="1.1" fill="#d0d0d0" opacity="0.6"/><path d="M749.9 38.2H761.5V45.9H758.5V63H752.9V45.9H749.9Z" fill="#e2e2e2" stroke="#cccccc" stroke-width="0.5"/><path d="M755.7 38.4H761.3V45.7H758.3V62.8H755.7Z" fill="#d2d2d2"/>
<path d="M758.6 65H769M763.8 59.8V70.2" stroke="#fff" stroke-width="3.2" fill="none"/><path d="M759.2 65H768.4M763.8 60.4V69.6" stroke="#b4b4b4" stroke-width="1.6" fill="none"/>
<path d="M785.8 38.2H806.6V47.8H803.7V66.1H788.8V47.8H785.8Z" fill="#dedede"/><rect x="785.8" y="38.2" width="1.8" height="9.6" fill="#d0d0d0"/><rect x="788.8" y="47.8" width="1.8" height="18.3" fill="#d0d0d0"/><rect x="787.8" y="38.5" width="1.8" height="9" fill="#f2f2f2"/><rect x="790.9" y="47.8" width="1.8" height="18" fill="#f2f2f2"/><rect x="788.8" y="65" width="14.9" height="1.1" fill="#d0d0d0" opacity="0.6"/><path d="M789.9 38.2H801.5V45.9H798.5V63H792.9V45.9H789.9Z" fill="#e2e2e2" stroke="#cccccc" stroke-width="0.5"/><path d="M795.7 38.4H801.3V45.7H798.3V62.8H795.7Z" fill="#d2d2d2"/>
<path d="M802.4 62.2L809.2 69M809.2 62.2L802.4 69" stroke="#b4b4b4" stroke-width="1.9" fill="none"/>
<path d="M829.2 38.2H850V47.8H847.1V66.1H832.2V47.8H829.2Z" fill="#dedede"/><rect x="829.2" y="38.2" width="1.8" height="9.6" fill="#d0d0d0"/><rect x="832.2" y="47.8" width="1.8" height="18.3" fill="#d0d0d0"/><rect x="831.2" y="38.5" width="1.8" height="9" fill="#f2f2f2"/><rect x="834.3" y="47.8" width="1.8" height="18" fill="#f2f2f2"/><rect x="832.2" y="65" width="14.9" height="1.1" fill="#d0d0d0" opacity="0.6"/><path d="M833.3 38.2H844.9V45.9H841.9V63H836.3V45.9H833.3Z" fill="#e2e2e2" stroke="#cccccc" stroke-width="0.5"/><path d="M839.1 38.4H844.7V45.7H841.7V62.8H839.1Z" fill="#d2d2d2"/>
<rect x="844.4" y="45.4" width="16" height="22" fill="#f6f6f6" stroke="#c0c0c0" stroke-width="0.9"/>
<path d="M850 50.5H857.5M850 54.5H857.5M850 58.5H857.5M850 62.5H857.5" stroke="#b8b8b8" stroke-width="0.9" fill="none"/>
<path d="M847.4 50.5H848.6M847.4 54.5H848.6M847.4 58.5H848.6M847.4 62.5H848.6" stroke="#b8b8b8" stroke-width="0.9" fill="none"/>
<path d="M873 39.2H893.8V48.8H890.9V67.1H876V48.8H873Z" fill="#dedede"/><rect x="873" y="39.2" width="1.8" height="9.6" fill="#d0d0d0"/><rect x="876" y="48.8" width="1.8" height="18.3" fill="#d0d0d0"/><rect x="875" y="39.5" width="1.8" height="9" fill="#f2f2f2"/><rect x="878.1" y="48.8" width="1.8" height="18" fill="#f2f2f2"/><rect x="876" y="66" width="14.9" height="1.1" fill="#d0d0d0" opacity="0.6"/><path d="M877.1 39.2H888.7V46.9H885.7V64H880.1V46.9H877.1Z" fill="#e2e2e2" stroke="#cccccc" stroke-width="0.5"/><path d="M882.9 39.4H888.5V46.7H885.5V63.8H882.9Z" fill="#d2d2d2"/>
<rect x="888.5" y="46.2" width="16" height="22" fill="#f6f6f6" stroke="#c0c0c0" stroke-width="0.9"/>
<text x="891.6" y="55.6" font-family="Liberation Sans, sans-serif" font-size="7.5" font-weight="700" fill="#b4b4b4">n1</text>
<text x="891.6" y="62.2" font-family="Liberation Sans, sans-serif" font-size="7.5" font-weight="700" fill="#b4b4b4">n</text>
<path d="M896.6 61.6H897.6M898.6 61.6H899.6M900.6 61.6H901.6" stroke="#b4b4b4" stroke-width="1" fill="none"/>
<path d="M55.4 60C55.03 63 55 68.4 55.1 72C55.2 75.6 55.25 78.6 56 81.6C56.75 84.6 58 87.48 59.6 90C61.2 92.52 63.2 94.98 65.6 96.7C68 98.42 71.1 99.2 74 100.3C76.9 101.4 79.98 102.55 83 103.3C86.02 104.05 89.08 104.55 92.1 104.8C95.12 105.05 98.6 105 101.1 104.8C103.6 104.6 105.3 104.35 107.1 103.6C108.9 102.85 110.4 101.55 111.9 100.3C113.4 99.05 114.6 97.82 116.1 96.1C117.6 94.38 119.5 92.22 120.9 90C122.3 87.78 123.5 85.3 124.5 82.8C125.5 80.3 126.35 77.8 126.9 75C127.45 72.2 127.73 69.5 127.8 66C127.87 62.5 127.53 57.4 127.3 54C127.07 50.6 126.95 48.4 126.4 45.6C125.85 42.8 125 39.9 124 37.2C123 34.5 121.6 31.45 120.4 29.4C119.2 27.35 118.2 26.15 116.8 24.9C115.4 23.65 113.8 22.8 112 21.9C110.2 21 108 20 106 19.5C104 19 102 18.93 100 18.9C98 18.87 95.58 19.05 94 19.3C92.42 19.55 91.88 19.68 90.5 20.4C89.12 21.12 87.72 22.18 85.7 23.6C83.68 25.02 80.82 27.05 78.4 28.9C75.98 30.75 73.28 32.93 71.2 34.7C69.12 36.47 67.5 37.82 65.9 39.5C64.3 41.18 63.03 42.38 61.6 44.8C60.17 47.22 58.33 51.47 57.3 54C56.27 56.53 55.77 57 55.4 60Z" stroke="#e6141e" stroke-width="2.1" fill="none" stroke-linecap="round" stroke-linejoin="round"/>
<path d="M92.4 32.3C90.88 32.42 86.18 32.75 83.3 33C80.42 33.25 77.07 33.42 75.1 33.8C73.13 34.18 72.58 34.63 71.5 35.3C70.42 35.97 69.47 36.98 68.6 37.8C67.73 38.62 66.42 39.37 66.3 40.2C66.18 41.03 67.12 42.12 67.9 42.8C68.68 43.48 70.48 44.05 71 44.3" stroke="#e6141e" stroke-width="2.1" fill="none" stroke-linecap="round" stroke-linejoin="round"/>
</svg>

<span class="t" style="left:55.0px;top:10.59px;font-size:11.5px;line-height:15.5px;color:#1e1e2c;letter-spacing:-0.197px">Accueil</span>
<span class="t" style="left:120.0px;top:10.59px;font-size:11.5px;line-height:15.5px;color:#1e1e2c;letter-spacing:-0.078px">Plan de travail</span>
<span class="t" style="left:221.7px;top:10.59px;font-size:11.5px;line-height:15.5px;color:#1e1e2c;letter-spacing:-0.188px">Filaire</span>
<span class="t" style="left:280.7px;top:10.59px;font-size:11.5px;line-height:15.5px;color:#1e1e2c;letter-spacing:-0.161px">Solide</span>
<span class="t" style="left:340.0px;top:10.59px;font-size:11.5px;line-height:15.5px;color:#1e1e2c;letter-spacing:-0.277px">Surface</span>
<span class="t" style="left:407.3px;top:10.59px;font-size:11.5px;line-height:15.5px;color:#3a5482;letter-spacing:-0.290px">Assemblage</span>
<span class="t" style="left:497.3px;top:10.59px;font-size:11.5px;line-height:15.5px;color:#1e1e2c;letter-spacing:0.118px">Edition</span>
<span class="t" style="left:563.0px;top:10.59px;font-size:11.5px;line-height:15.5px;color:#1e1e2c;letter-spacing:-0.212px">Assistants</span>
<span class="t" style="left:644.0px;top:10.59px;font-size:11.5px;line-height:15.5px;color:#1e1e2c;letter-spacing:0.103px">Visualisation</span>
<span class="t" style="left:740.0px;top:10.59px;font-size:11.5px;line-height:15.5px;color:#1e1e2c;letter-spacing:0.330px">Annotation</span>
<span class="t" style="left:829.7px;top:10.59px;font-size:11.5px;line-height:15.5px;color:#1e1e2c;letter-spacing:-0.018px">Mise en plan</span>
<span class="t" style="left:925.0px;top:10.59px;font-size:11.5px;line-height:15.5px;color:#1e1e2c;letter-spacing:0.139px">Affichage</span>
<span class="t" style="left:1029.0px;top:10.59px;font-size:11.5px;line-height:15.5px;color:#1e1e2c;letter-spacing:-0.281px">Gérer</span>
<span class="t" style="left:1112.3px;top:10.59px;font-size:11.5px;line-height:15.5px;color:#1e1e2c;letter-spacing:-0.156px">perso</span>
<span class="t" style="left:138.2px;top:38.59px;font-size:11.5px;line-height:15.5px;color:#1e1e2c;letter-spacing:-0.086px">Avec power-formes</span>
<span class="t" style="left:138.2px;top:60.59px;font-size:11.5px;line-height:15.5px;color:#1e1e2c;letter-spacing:0.106px">Ajouter composant</span>
<span class="t" style="left:138.2px;top:82.59px;font-size:11.5px;line-height:15.5px;color:#c4c4ca;letter-spacing:-0.049px">Ajouter composant avancé</span>
<span class="t" style="left:280.3px;top:71.59px;font-size:11.5px;line-height:15.5px;color:#1e1e2c;letter-spacing:-0.141px">Assistant</span>
<span class="t" style="left:164.6px;top:103.59px;font-size:11.5px;line-height:15.5px;color:#1e1e2c;letter-spacing:-0.068px">Composant</span>
<span class="t" style="left:343.6px;top:71.59px;font-size:11.5px;line-height:15.5px;color:#c4c4ca;letter-spacing:-0.236px">Liaison</span>
<span class="t" style="left:404.5px;top:38.59px;font-size:11.5px;line-height:15.5px;color:#c4c4ca;letter-spacing:-0.146px">Eclatement à distance</span>
<span class="t" style="left:404.5px;top:60.59px;font-size:11.5px;line-height:15.5px;color:#c4c4ca;letter-spacing:-0.047px">Eclatement angulaire</span>
<span class="t" style="left:404.5px;top:82.59px;font-size:11.5px;line-height:15.5px;color:#c4c4ca;letter-spacing:0.037px">Intersection</span>
<span class="t" style="left:541.5px;top:38.59px;font-size:11.5px;line-height:15.5px;color:#1e1e2c;letter-spacing:-0.213px">Gérer les modèles sources</span>
<span class="t" style="left:541.5px;top:60.59px;font-size:11.5px;line-height:15.5px;color:#1e1e2c;letter-spacing:-0.056px">Actualiser les composants importés</span>
<span class="t" style="left:541.5px;top:82.59px;font-size:11.5px;line-height:15.5px;color:#1e1e2c;letter-spacing:-0.010px">Convertir en local</span>
<span class="t" style="left:510.7px;top:103.59px;font-size:11.5px;line-height:15.5px;color:#1e1e2c;letter-spacing:0.299px">Modifier</span>
<span class="t" style="left:738.5px;top:71.59px;font-size:11.5px;line-height:15.5px;color:#c4c4ca;letter-spacing:-0.255px">Générer</span>
<span class="t" style="left:785.8px;top:71.59px;font-size:11.5px;line-height:15.5px;color:#c4c4ca;letter-spacing:-0.217px">Retirer</span>
<span class="t" style="left:825.7px;top:71.59px;font-size:11.5px;line-height:15.5px;color:#c4c4ca;letter-spacing:-0.705px">Résumé</span>
<span class="t" style="left:871.6px;top:71.59px;font-size:11.5px;line-height:15.5px;color:#c4c4ca;letter-spacing:-0.576px">Avancé</span>
<span class="t" style="left:787.6px;top:103.59px;font-size:11.5px;line-height:15.5px;color:#1e1e2c;letter-spacing:-0.148px">Power-formes</span>
<span class="t" style="left:-1.0px;top:10.59px;font-size:11.5px;line-height:15.5px;color:#ffffff;letter-spacing:-0.114px">ichier</span>
<span class="t" style="left:0.7px;top:71.59px;font-size:11.5px;line-height:15.5px;color:#1e1e2c;letter-spacing:-0.122px">ouveau</span>
<span class="t" style="left:0.3px;top:103.59px;font-size:11.5px;line-height:15.5px;color:#1e1e2c;letter-spacing:-0.459px">semblage</span>
<span class="t" style="left:68.4px;top:71.59px;font-size:11.5px;line-height:15.5px;color:#1e1e2c;letter-spacing:0.120px">A partir</span>
<span class="t" style="left:62.1px;top:84.59px;font-size:11.5px;line-height:15.5px;color:#1e1e2c;letter-spacing:-0.150px">de solides</span>
<span class="t" style="-webkit-text-stroke:0;left:-8.4px;top:128.41px;font-size:19px;line-height:23px;color:#1f2f4f;letter-spacing:0.270px">xplorateur</span>
</body></html>
